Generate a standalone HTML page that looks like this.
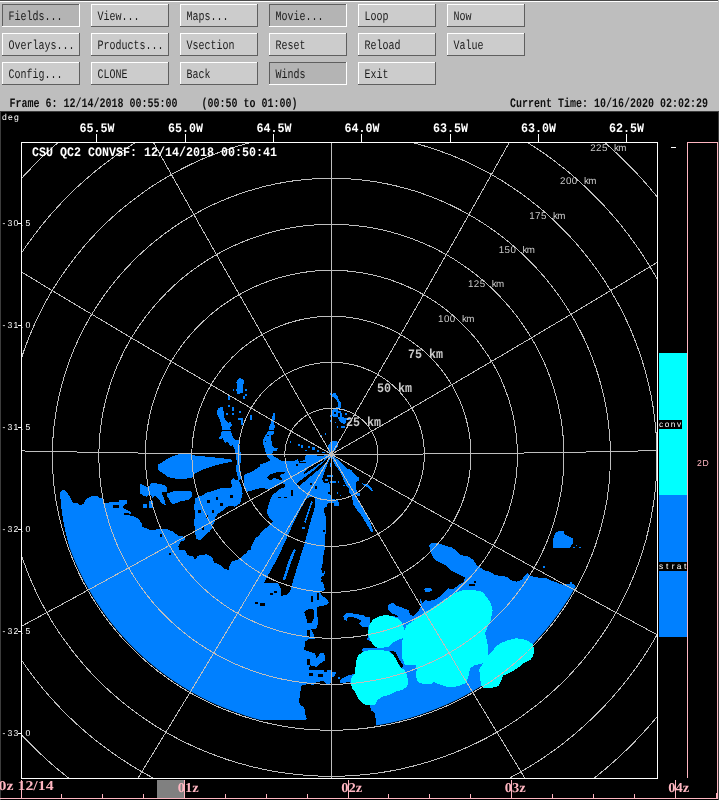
<!DOCTYPE html>
<html><head><meta charset="utf-8"><title>CSU QC2 CONVSF radar display</title>
<style>html,body{margin:0;padding:0;background:#000;overflow:hidden}svg{display:block}text{text-rendering:geometricPrecision;white-space:pre}</style>
</head><body>
<svg width="719" height="800" viewBox="0 0 719 800" style="will-change:transform">
<rect x="0" y="0" width="719" height="800" fill="#000"/>
<rect x="0" y="0" width="719" height="111" fill="#bebebe"/>
<rect x="0" y="0" width="718" height="1" fill="#4a4a4a"/>
<rect x="0" y="1" width="718" height="1" fill="#fff"/>
<rect x="0" y="111" width="719" height="1" fill="#3c3c3c"/>
<rect x="0" y="111" width="1" height="689" fill="#3c3c3c"/>
<rect x="718" y="111" width="1" height="689" fill="#3c3c3c"/>
<rect x="2" y="4" width="78" height="23" fill="#b4b4b4"/>
<rect x="2" y="4" width="78" height="1" fill="#5f5f5f"/>
<rect x="2" y="4" width="1" height="23" fill="#5f5f5f"/>
<rect x="2" y="26" width="78" height="1" fill="#fff"/>
<rect x="79" y="4" width="1" height="23" fill="#fff"/>
<text x="8.5" y="20" font-family="'Liberation Mono', monospace" font-size="13" font-weight="normal" fill="#1a1a1a" textLength="54" lengthAdjust="spacingAndGlyphs" >Fields...</text>
<rect x="91" y="4" width="78" height="23" fill="#cccccc"/>
<rect x="91" y="4" width="78" height="1" fill="#fff"/>
<rect x="91" y="4" width="1" height="23" fill="#fff"/>
<rect x="91" y="26" width="78" height="1" fill="#5f5f5f"/>
<rect x="168" y="4" width="1" height="23" fill="#5f5f5f"/>
<text x="97.5" y="20" font-family="'Liberation Mono', monospace" font-size="13" font-weight="normal" fill="#1a1a1a" textLength="42" lengthAdjust="spacingAndGlyphs" >View...</text>
<rect x="180" y="4" width="78" height="23" fill="#cccccc"/>
<rect x="180" y="4" width="78" height="1" fill="#fff"/>
<rect x="180" y="4" width="1" height="23" fill="#fff"/>
<rect x="180" y="26" width="78" height="1" fill="#5f5f5f"/>
<rect x="257" y="4" width="1" height="23" fill="#5f5f5f"/>
<text x="186.5" y="20" font-family="'Liberation Mono', monospace" font-size="13" font-weight="normal" fill="#1a1a1a" textLength="42" lengthAdjust="spacingAndGlyphs" >Maps...</text>
<rect x="269" y="4" width="78" height="23" fill="#b4b4b4"/>
<rect x="269" y="4" width="78" height="1" fill="#5f5f5f"/>
<rect x="269" y="4" width="1" height="23" fill="#5f5f5f"/>
<rect x="269" y="26" width="78" height="1" fill="#fff"/>
<rect x="346" y="4" width="1" height="23" fill="#fff"/>
<text x="275.5" y="20" font-family="'Liberation Mono', monospace" font-size="13" font-weight="normal" fill="#1a1a1a" textLength="48" lengthAdjust="spacingAndGlyphs" >Movie...</text>
<rect x="358" y="4" width="78" height="23" fill="#cccccc"/>
<rect x="358" y="4" width="78" height="1" fill="#fff"/>
<rect x="358" y="4" width="1" height="23" fill="#fff"/>
<rect x="358" y="26" width="78" height="1" fill="#5f5f5f"/>
<rect x="435" y="4" width="1" height="23" fill="#5f5f5f"/>
<text x="364.5" y="20" font-family="'Liberation Mono', monospace" font-size="13" font-weight="normal" fill="#1a1a1a" textLength="24" lengthAdjust="spacingAndGlyphs" >Loop</text>
<rect x="447" y="4" width="78" height="23" fill="#cccccc"/>
<rect x="447" y="4" width="78" height="1" fill="#fff"/>
<rect x="447" y="4" width="1" height="23" fill="#fff"/>
<rect x="447" y="26" width="78" height="1" fill="#5f5f5f"/>
<rect x="524" y="4" width="1" height="23" fill="#5f5f5f"/>
<text x="453.5" y="20" font-family="'Liberation Mono', monospace" font-size="13" font-weight="normal" fill="#1a1a1a" textLength="18" lengthAdjust="spacingAndGlyphs" >Now</text>
<rect x="2" y="33" width="78" height="23" fill="#cccccc"/>
<rect x="2" y="33" width="78" height="1" fill="#fff"/>
<rect x="2" y="33" width="1" height="23" fill="#fff"/>
<rect x="2" y="55" width="78" height="1" fill="#5f5f5f"/>
<rect x="79" y="33" width="1" height="23" fill="#5f5f5f"/>
<text x="8.5" y="49" font-family="'Liberation Mono', monospace" font-size="13" font-weight="normal" fill="#1a1a1a" textLength="66" lengthAdjust="spacingAndGlyphs" >Overlays...</text>
<rect x="91" y="33" width="78" height="23" fill="#cccccc"/>
<rect x="91" y="33" width="78" height="1" fill="#fff"/>
<rect x="91" y="33" width="1" height="23" fill="#fff"/>
<rect x="91" y="55" width="78" height="1" fill="#5f5f5f"/>
<rect x="168" y="33" width="1" height="23" fill="#5f5f5f"/>
<text x="97.5" y="49" font-family="'Liberation Mono', monospace" font-size="13" font-weight="normal" fill="#1a1a1a" textLength="66" lengthAdjust="spacingAndGlyphs" >Products...</text>
<rect x="180" y="33" width="78" height="23" fill="#cccccc"/>
<rect x="180" y="33" width="78" height="1" fill="#fff"/>
<rect x="180" y="33" width="1" height="23" fill="#fff"/>
<rect x="180" y="55" width="78" height="1" fill="#5f5f5f"/>
<rect x="257" y="33" width="1" height="23" fill="#5f5f5f"/>
<text x="186.5" y="49" font-family="'Liberation Mono', monospace" font-size="13" font-weight="normal" fill="#1a1a1a" textLength="48" lengthAdjust="spacingAndGlyphs" >Vsection</text>
<rect x="269" y="33" width="78" height="23" fill="#cccccc"/>
<rect x="269" y="33" width="78" height="1" fill="#fff"/>
<rect x="269" y="33" width="1" height="23" fill="#fff"/>
<rect x="269" y="55" width="78" height="1" fill="#5f5f5f"/>
<rect x="346" y="33" width="1" height="23" fill="#5f5f5f"/>
<text x="275.5" y="49" font-family="'Liberation Mono', monospace" font-size="13" font-weight="normal" fill="#1a1a1a" textLength="30" lengthAdjust="spacingAndGlyphs" >Reset</text>
<rect x="358" y="33" width="78" height="23" fill="#cccccc"/>
<rect x="358" y="33" width="78" height="1" fill="#fff"/>
<rect x="358" y="33" width="1" height="23" fill="#fff"/>
<rect x="358" y="55" width="78" height="1" fill="#5f5f5f"/>
<rect x="435" y="33" width="1" height="23" fill="#5f5f5f"/>
<text x="364.5" y="49" font-family="'Liberation Mono', monospace" font-size="13" font-weight="normal" fill="#1a1a1a" textLength="36" lengthAdjust="spacingAndGlyphs" >Reload</text>
<rect x="447" y="33" width="78" height="23" fill="#cccccc"/>
<rect x="447" y="33" width="78" height="1" fill="#fff"/>
<rect x="447" y="33" width="1" height="23" fill="#fff"/>
<rect x="447" y="55" width="78" height="1" fill="#5f5f5f"/>
<rect x="524" y="33" width="1" height="23" fill="#5f5f5f"/>
<text x="453.5" y="49" font-family="'Liberation Mono', monospace" font-size="13" font-weight="normal" fill="#1a1a1a" textLength="30" lengthAdjust="spacingAndGlyphs" >Value</text>
<rect x="2" y="62" width="78" height="23" fill="#cccccc"/>
<rect x="2" y="62" width="78" height="1" fill="#fff"/>
<rect x="2" y="62" width="1" height="23" fill="#fff"/>
<rect x="2" y="84" width="78" height="1" fill="#5f5f5f"/>
<rect x="79" y="62" width="1" height="23" fill="#5f5f5f"/>
<text x="8.5" y="78" font-family="'Liberation Mono', monospace" font-size="13" font-weight="normal" fill="#1a1a1a" textLength="54" lengthAdjust="spacingAndGlyphs" >Config...</text>
<rect x="91" y="62" width="78" height="23" fill="#cccccc"/>
<rect x="91" y="62" width="78" height="1" fill="#fff"/>
<rect x="91" y="62" width="1" height="23" fill="#fff"/>
<rect x="91" y="84" width="78" height="1" fill="#5f5f5f"/>
<rect x="168" y="62" width="1" height="23" fill="#5f5f5f"/>
<text x="97.5" y="78" font-family="'Liberation Mono', monospace" font-size="13" font-weight="normal" fill="#1a1a1a" textLength="30" lengthAdjust="spacingAndGlyphs" >CLONE</text>
<rect x="180" y="62" width="78" height="23" fill="#cccccc"/>
<rect x="180" y="62" width="78" height="1" fill="#fff"/>
<rect x="180" y="62" width="1" height="23" fill="#fff"/>
<rect x="180" y="84" width="78" height="1" fill="#5f5f5f"/>
<rect x="257" y="62" width="1" height="23" fill="#5f5f5f"/>
<text x="186.5" y="78" font-family="'Liberation Mono', monospace" font-size="13" font-weight="normal" fill="#1a1a1a" textLength="24" lengthAdjust="spacingAndGlyphs" >Back</text>
<rect x="269" y="62" width="78" height="23" fill="#b4b4b4"/>
<rect x="269" y="62" width="78" height="1" fill="#5f5f5f"/>
<rect x="269" y="62" width="1" height="23" fill="#5f5f5f"/>
<rect x="269" y="84" width="78" height="1" fill="#fff"/>
<rect x="346" y="62" width="1" height="23" fill="#fff"/>
<text x="275.5" y="78" font-family="'Liberation Mono', monospace" font-size="13" font-weight="normal" fill="#1a1a1a" textLength="30" lengthAdjust="spacingAndGlyphs" >Winds</text>
<rect x="358" y="62" width="78" height="23" fill="#cccccc"/>
<rect x="358" y="62" width="78" height="1" fill="#fff"/>
<rect x="358" y="62" width="1" height="23" fill="#fff"/>
<rect x="358" y="84" width="78" height="1" fill="#5f5f5f"/>
<rect x="435" y="62" width="1" height="23" fill="#5f5f5f"/>
<text x="364.5" y="78" font-family="'Liberation Mono', monospace" font-size="13" font-weight="normal" fill="#1a1a1a" textLength="24" lengthAdjust="spacingAndGlyphs" >Exit</text>
<text x="9.5" y="107" font-family="'Liberation Mono', monospace" font-size="13" font-weight="bold" fill="#111" textLength="168" lengthAdjust="spacingAndGlyphs" >Frame 6: 12/14/2018 00:55:00</text>
<text x="201.5" y="107" font-family="'Liberation Mono', monospace" font-size="13" font-weight="bold" fill="#111" textLength="96" lengthAdjust="spacingAndGlyphs" >(00:50 to 01:00)</text>
<text x="510" y="107" font-family="'Liberation Mono', monospace" font-size="13" font-weight="bold" fill="#111" textLength="198" lengthAdjust="spacingAndGlyphs" >Current Time: 10/16/2020 02:02:29</text>
<defs><clipPath id="pc"><rect x="21.5" y="142.5" width="636" height="636"/></clipPath></defs>
<g clip-path="url(#pc)">
<defs><clipPath id="rc"><path d="M331.4,179.6 L340.9,179.8 L350.5,180.2 L360.0,181.1 L369.4,182.2 L378.8,183.7 L388.2,185.5 L397.5,187.6 L406.7,190.0 L415.9,192.8 L424.9,195.8 L433.8,199.2 L442.6,202.9 L451.3,206.9 L459.9,211.1 L468.3,215.7 L476.5,220.6 L484.6,225.7 L492.5,231.1 L500.1,236.8 L507.6,242.7 L514.9,248.9 L522.0,255.4 L528.9,262.1 L535.5,269.0 L541.9,276.1 L548.0,283.5 L553.9,291.1 L559.5,298.8 L564.8,306.8 L569.9,314.9 L574.7,323.2 L579.2,331.7 L583.4,340.3 L587.3,349.1 L590.9,358.0 L594.2,367.0 L597.1,376.1 L599.8,385.3 L602.1,394.6 L604.1,404.0 L605.8,413.4 L607.1,422.9 L608.1,432.5 L608.8,442.0 L609.1,451.6 L609.1,461.2 L608.7,470.8 L608.1,480.3 L607.0,489.9 L605.7,499.4 L604.0,508.8 L601.9,518.2 L599.6,527.5 L596.9,536.7 L593.8,545.9 L590.5,554.9 L586.8,563.8 L582.8,572.5 L578.5,581.2 L573.9,589.6 L569.0,597.9 L563.7,606.1 L558.2,614.0 L552.4,621.8 L546.4,629.3 L540.0,636.6 L533.4,643.7 L526.6,650.6 L519.5,657.2 L512.2,663.6 L504.6,669.8 L496.8,675.6 L488.8,681.2 L480.6,686.5 L472.2,691.5 L463.7,696.3 L454.9,700.7 L446.1,704.8 L437.0,708.6 L427.8,712.1 L418.6,715.3 L409.2,718.2 L399.7,720.7 L390.1,722.9 L380.4,724.8 L370.7,726.3 L360.9,727.5 L351.1,728.3 L341.3,728.8 L331.4,729.0 L321.5,728.8 L311.7,728.3 L301.9,727.5 L292.1,726.3 L282.4,724.8 L272.7,722.9 L263.1,720.7 L253.6,718.2 L244.2,715.3 L235.0,712.1 L225.8,708.6 L216.7,704.8 L207.9,700.7 L199.1,696.3 L190.6,691.5 L182.2,686.5 L174.0,681.2 L166.0,675.6 L158.2,669.8 L150.6,663.6 L143.3,657.2 L136.2,650.6 L129.4,643.7 L122.8,636.6 L116.4,629.3 L110.4,621.8 L104.6,614.0 L99.1,606.1 L93.8,597.9 L88.9,589.6 L84.3,581.2 L80.0,572.5 L76.0,563.8 L72.3,554.9 L69.0,545.9 L65.9,536.7 L63.2,527.5 L60.9,518.2 L58.8,508.8 L57.1,499.4 L55.8,489.9 L54.7,480.3 L54.1,470.8 L53.7,461.2 L53.7,451.6 L54.0,442.0 L54.7,432.5 L55.7,422.9 L57.0,413.4 L58.7,404.0 L60.7,394.6 L63.0,385.3 L65.7,376.1 L68.6,367.0 L71.9,358.0 L75.5,349.1 L79.4,340.3 L83.6,331.7 L88.1,323.2 L92.9,314.9 L98.0,306.8 L103.3,298.8 L108.9,291.1 L114.8,283.5 L120.9,276.1 L127.3,269.0 L133.9,262.1 L140.8,255.4 L147.9,248.9 L155.2,242.7 L162.7,236.8 L170.3,231.1 L178.2,225.7 L186.3,220.6 L194.5,215.7 L202.9,211.1 L211.5,206.9 L220.2,202.9 L229.0,199.2 L237.9,195.8 L246.9,192.8 L256.1,190.0 L265.3,187.6 L274.6,185.5 L284.0,183.7 L293.4,182.2 L302.8,181.1 L312.3,180.2 L321.9,179.8Z"/></clipPath>
<clipPath id="t0"><rect x="20" y="430" width="120" height="120"/></clipPath>
<clipPath id="t1"><rect x="20" y="550" width="120" height="120"/></clipPath>
<clipPath id="t2"><rect x="140" y="550" width="120" height="120"/></clipPath>
<clipPath id="t3"><rect x="140" y="430" width="120" height="120"/></clipPath>
<clipPath id="t4"><rect x="260" y="430" width="120" height="120"/></clipPath>
<clipPath id="t5"><rect x="380" y="430" width="120" height="120"/></clipPath>
<clipPath id="t6"><rect x="500" y="430" width="120" height="120"/></clipPath>
<clipPath id="t7"><rect x="260" y="550" width="80" height="120"/></clipPath>
<clipPath id="t8"><rect x="140" y="670" width="120" height="120"/></clipPath>
<clipPath id="t9"><rect x="260" y="670" width="80" height="120"/></clipPath>
<clipPath id="t10"><rect x="200" y="360" width="90" height="70"/></clipPath>
<clipPath id="t11"><rect x="300" y="380" width="80" height="50"/></clipPath>
<clipPath id="t12"><rect x="340" y="540" width="280" height="200"/></clipPath>
</defs>
<g clip-path="url(#rc)" shape-rendering="crispEdges">
<g clip-path="url(#t0)">
<rect x="20" y="430" width="120" height="120" fill="#000"/>
<polygon points="60.1,492.6 62.6,490.1 65.1,490.1 67.6,493.4 70.1,496.8 71.7,500.9 73.4,503.1 77.6,503.4 79.2,504.8 83.4,504.3 85.9,499.3 88.4,497.6 91.8,496.4 98.4,496.4 99.3,498.4 103.4,498.1 104.3,503.4 108.5,502.6 113.5,502.1 118.5,501.8 119.3,500.1 126.8,500.1 126.8,503.4 123.5,505.1 124.3,508.4 130.2,511.8 131.0,513.4 128.5,515.1 135.2,516.8 141.8,521.0 141.8,551.8 70.1,551.8 67.6,540.2 65.1,530.1 62.6,516.8 60.9,505.1" fill="#0080ff"/>
<polygon points="112.6,505.4 118.8,505.4 118.8,508.1 112.6,508.1" fill="#000"/>
<polygon points="122.6,506.4 125.1,506.4 125.1,508.4 122.6,508.4" fill="#000"/>
<polygon points="124.3,512.6 128.5,512.6 128.5,515.1 124.3,515.1" fill="#000"/>
</g>
<g clip-path="url(#t1)">
<rect x="20" y="550" width="120" height="120" fill="#000"/>
<polygon points="18.3,548.3 141.8,548.3 141.8,671.8 18.3,671.8" fill="#0080ff"/>
</g>
<g clip-path="url(#t2)">
<rect x="140" y="550" width="120" height="120" fill="#000"/>
<polygon points="138.3,548.3 261.8,548.3 261.8,671.8 138.3,671.8" fill="#0080ff"/>
<polygon points="184.2,548.3 187.6,555.0 193.4,556.7 195.1,560.0 197.6,555.8 206.8,554.2 211.8,556.7 214.3,562.5 220.1,565.0 223.4,568.4 228.5,570.0 229.3,565.9 231.8,561.7 236.8,560.0 241.8,556.7 246.8,552.5 248.5,548.3" fill="#000"/>
<polygon points="255.2,602.1 257.8,602.1 257.8,604.1 255.2,604.1" fill="#000"/>
<polygon points="168.9,553.3 171.0,553.3 171.0,554.7 168.9,554.7" fill="#000"/>
</g>
<g clip-path="url(#t3)">
<rect x="140" y="430" width="120" height="120" fill="#000"/>
<polygon points="157.5,465.0 161.7,462.5 166.7,459.2 172.5,456.4 180.1,453.7 190.1,453.4 193.4,455.4 206.8,456.7 223.4,458.4 231.8,459.7 231.8,461.7 223.4,463.4 213.4,465.9 206.8,468.1 200.1,470.9 195.1,473.7 191.7,477.6 183.4,479.2 173.4,478.4 167.5,476.7 163.4,473.7 159.2,470.9 157.5,467.6" fill="#0080ff"/>
<polygon points="138.3,482.6 143.3,485.1 148.3,487.6 151.7,482.6 156.7,483.4 165.0,485.1 167.5,487.6 166.7,491.8 161.7,492.6 163.4,496.8 165.0,501.8 165.9,505.1 161.7,503.4 158.4,498.4 155.0,495.9 152.5,497.6 150.0,494.3 146.7,496.8 142.5,495.1 138.3,492.1" fill="#0080ff"/>
<polygon points="142.5,504.3 146.7,504.3 146.7,508.4 142.5,508.4" fill="#0080ff"/>
<polygon points="149.2,500.9 152.5,500.9 152.5,507.6 149.2,507.6" fill="#0080ff"/>
<polygon points="166.7,493.4 173.4,491.4 190.1,490.9 192.6,492.6 191.7,496.8 188.4,500.1 181.7,500.9 175.9,503.4 172.5,504.3 170.0,500.9 167.5,496.8" fill="#0080ff"/>
<polygon points="195.1,498.4 201.8,497.6 206.8,495.1 213.4,492.6 223.4,492.1 228.5,490.1 231.8,486.7 231.0,480.1 233.5,477.6 236.0,480.1 238.5,480.1 240.1,483.4 241.8,487.6 242.6,493.4 240.1,496.8 233.5,495.9 230.1,498.4 223.4,500.9 220.1,505.9 215.1,505.1 213.4,513.4 210.1,511.8 208.4,508.4 203.4,509.3 201.8,503.4 198.4,501.8 195.9,501.8" fill="#0080ff"/>
<polygon points="196.7,508.4 203.4,510.1 205.1,518.5 210.1,523.5 213.4,526.8 210.1,530.1 206.8,533.5 203.4,536.8 200.1,540.2 196.7,538.5 195.1,530.1 194.2,520.1 195.9,513.4" fill="#0080ff"/>
<polygon points="195.1,500.0 197.6,496.7 203.4,495.0 206.8,492.5 213.4,490.8 220.1,488.3 240.1,488.3 241.8,496.7 240.1,503.4 235.1,506.7 228.5,505.9 223.4,510.0 218.4,513.4 215.1,517.5 214.3,523.4 211.8,525.9 210.1,531.7 205.9,533.4 203.4,537.6 199.2,540.1 195.9,538.4 195.1,531.7 194.2,523.4 195.1,515.0 194.2,506.7" fill="#0080ff"/>
<polygon points="206.8,500.0 210.1,500.0 210.1,503.4 206.8,503.4" fill="#000"/>
<polygon points="215.9,496.7 218.4,496.7 218.4,500.3 215.9,500.3" fill="#000"/>
<polygon points="220.1,503.4 223.4,503.4 223.4,505.9 220.1,505.9" fill="#000"/>
<polygon points="198.4,510.0 200.9,510.0 200.9,513.4 198.4,513.4" fill="#000"/>
<polygon points="205.9,515.0 208.4,515.0 208.4,518.4 205.9,518.4" fill="#000"/>
<polygon points="211.8,510.0 214.3,510.0 214.3,512.5 211.8,512.5" fill="#000"/>
<polygon points="201.8,526.7 204.3,526.7 204.3,530.1 201.8,530.1" fill="#000"/>
<polygon points="230.1,495.0 232.6,495.0 232.6,497.5 230.1,497.5" fill="#000"/>
<polygon points="221.8,430.8 231.0,430.8 232.6,436.7 235.1,440.0 238.5,440.0 240.1,448.4 241.0,456.7 240.1,468.4 241.8,478.4 238.5,480.1 236.0,470.1 236.8,461.7 235.1,450.0 232.6,445.0 230.1,446.7 227.6,441.7 225.1,443.4 222.6,438.3 218.4,439.2 220.9,435.0" fill="#0080ff"/>
<polygon points="243.5,475.1 253.5,470.9 261.8,465.0 261.8,487.6 253.5,490.1 246.8,491.8 244.3,485.1 243.5,480.1" fill="#0080ff"/>
<polygon points="138.3,521.0 142.5,523.5 141.7,526.8 146.7,528.5 150.0,530.1 158.4,529.3 165.0,528.5 173.4,531.8 178.4,536.0 185.1,536.8 185.1,540.2 180.1,541.8 178.4,546.8 180.1,551.8 138.3,551.8" fill="#0080ff"/>
<polygon points="160.0,533.5 161.7,533.5 161.7,536.8 160.0,536.8" fill="#000"/>
<polygon points="261.8,533.5 255.2,538.5 251.8,545.2 250.2,551.8 261.8,551.8" fill="#0080ff"/>
</g>
<g clip-path="url(#t4)">
<rect x="260" y="430" width="120" height="120" fill="#000"/>
<polygon points="258.9,464.5 263.3,463.4 267.8,461.7 270.6,460.3 267.8,457.8 266.1,453.9 265.0,450.0 263.3,444.5 263.3,440.0 263.9,437.8 266.7,433.3 268.9,431.1 273.9,431.1 273.4,434.5 271.1,435.6 270.6,438.9 272.2,442.2 271.7,445.6 274.5,447.8 277.8,448.4 276.7,450.6 273.4,451.1 272.2,453.9 273.9,456.7 276.7,457.8 278.9,459.5 282.3,461.2 293.4,461.2 297.8,459.2 298.9,461.7 304.5,460.0 304.5,456.1 307.8,455.0 315.6,455.0 319.0,456.1 322.3,455.8 329.0,454.7 331.3,454.3 330.6,463.3 330.0,470.0 328.4,476.7 329.5,483.4 330.0,492.3 331.5,499.2 338.4,499.8 338.7,505.6 334.5,506.2 333.4,502.8 327.8,503.4 326.7,506.7 323.4,508.9 325.6,516.7 326.1,525.6 325.6,532.3 325.0,541.2 325.6,551.2 240.0,552.0 240.0,464.0" fill="#0080ff"/>
<polygon points="327.9,457.8 323.4,462.3 317.9,466.7 312.3,471.7 306.7,475.6 302.3,479.0 297.8,482.3 296.7,485.1 299.5,485.6 304.5,481.7 310.1,476.7 315.6,472.3 320.6,467.8 325.6,462.8 328.4,459.5" fill="#000"/>
<polygon points="324.0,459.2 319.0,461.7 313.4,464.7 309.0,467.8 304.5,471.7 303.9,473.9 309.0,471.2 314.5,467.3 320.1,463.4 324.5,460.6" fill="#000"/>
<polygon points="267.2,477.3 270.0,474.5 274.5,472.8 277.8,472.3 284.5,472.1 285.0,473.4 281.1,473.9 280.0,476.7 282.3,479.0 281.1,480.6 277.8,479.0 274.5,477.8 271.7,479.5 268.9,479.5" fill="#000"/>
<polygon points="250.0,487.8 258.9,487.8 264.4,488.3 267.8,489.4 272.2,487.8 277.8,485.6 282.2,483.3 285.0,484.4 284.4,487.2 280.0,488.9 276.7,491.7 272.2,495.0 270.0,500.0 266.7,511.7 269.2,517.5 273.3,521.7 269.2,525.8 263.3,530.0 256.7,536.7 250.0,545.0" fill="#000"/>
<polygon points="291.2,490.1 292.8,490.1 292.8,495.6 291.2,495.6" fill="#000"/>
<polygon points="295.6,463.9 298.4,463.9 298.4,465.6 295.6,465.6" fill="#000"/>
<polygon points="298.9,462.0 305.6,462.0 305.6,463.4 298.9,463.4" fill="#000"/>
<polygon points="278.4,496.8 280.6,496.8 280.6,498.4 278.4,498.4" fill="#000"/>
<polygon points="283.9,496.8 286.7,496.8 286.7,498.4 283.9,498.4" fill="#000"/>
<polygon points="314.5,485.6 316.7,485.6 316.7,489.0 314.5,489.0" fill="#000"/>
<polygon points="264.5,440.6 266.1,440.6 266.1,442.2 264.5,442.2" fill="#000"/>
<polygon points="267.2,434.5 268.9,434.5 268.9,436.1 267.2,436.1" fill="#000"/>
<polygon points="330.3,458.4 328.4,462.3 326.1,467.8 323.9,473.4 322.3,479.0 322.8,482.3 326.1,483.2 328.4,482.3 330.0,484.5 331.2,485.6 331.2,458.4" fill="#000"/>
<polygon points="329.5,463.4 331.2,463.4 331.2,466.7 329.5,466.7" fill="#0080ff"/>
<polygon points="326.7,474.5 329.5,474.5 329.5,476.7 326.7,476.7" fill="#0080ff"/>
<polygon points="325.0,479.0 327.8,479.0 327.8,480.6 325.0,480.6" fill="#0080ff"/>
<polygon points="313.0,496.5 306.7,498.3 300.0,510.0 293.3,523.3 286.7,538.3 278.3,556.7 270.0,571.7 264.2,582.5 278.3,583.3 280.8,588.3 280.8,595.8 286.7,595.0 290.8,590.0 293.3,580.0 298.3,563.3 304.2,545.0 310.0,523.3 315.0,506.7 315.5,497.0" fill="#000"/>
<polygon points="294.2,549.2 295.8,550.0 290.8,563.3 285.0,580.0 282.5,580.8 286.7,566.7 290.8,555.0" fill="#0080ff"/>
<polygon points="311.1,501.2 312.8,501.7 308.3,514.5 305.6,522.3 304.2,522.3 306.7,513.9" fill="#0080ff"/>
<polygon points="310.0,482.8 312.2,482.8 312.2,485.0 310.0,485.0" fill="#000"/>
<polygon points="314.5,485.6 316.7,485.6 316.7,488.9 314.5,488.9" fill="#000"/>
<polygon points="328.4,491.7 330.0,491.7 330.0,493.9 328.4,493.9" fill="#000"/>
<polygon points="322.8,530.1 325.0,530.1 325.0,531.8 322.8,531.8" fill="#000"/>
<polygon points="331.4,454.3 334.0,456.5 338.3,460.0 346.7,468.3 351.2,470.0 355.6,475.6 359.0,477.8 359.5,480.6 355.6,482.2 355.6,487.8 357.9,492.3 360.1,493.9 359.0,496.1 355.6,495.0 357.9,500.0 362.3,506.7 366.8,514.5 370.1,522.3 372.3,527.9 372.9,531.8 371.2,531.8 366.8,524.5 362.3,516.7 357.9,511.2 353.4,504.5 352.3,498.9 351.2,495.0 349.0,492.3 349.0,488.9 346.7,486.7 344.5,482.2 342.3,476.7 338.9,470.0 335.0,465.0 332.0,458.0" fill="#0080ff"/>
<polygon points="362.3,483.4 366.8,483.9 370.1,486.7 372.9,490.0 372.3,491.7 370.1,490.0 366.8,486.7 363.4,485.0" fill="#0080ff"/>
<polygon points="330.0,475.0 333.4,475.0 333.4,476.7 330.0,476.7" fill="#0080ff"/>
<polygon points="330.0,481.1 335.6,481.1 335.6,482.8 330.0,482.8" fill="#0080ff"/>
<polygon points="337.8,481.1 339.2,481.1 339.2,482.5 337.8,482.5" fill="#0080ff"/>
<polygon points="342.8,485.0 345.1,485.0 345.1,486.1 342.8,486.1" fill="#0080ff"/>
<polygon points="347.8,486.7 349.5,486.7 349.5,488.4 347.8,488.4" fill="#0080ff"/>
<polygon points="336.7,492.3 338.4,492.3 338.4,493.9 336.7,493.9" fill="#0080ff"/>
<polygon points="339.5,494.5 341.2,494.5 341.2,496.1 339.5,496.1" fill="#0080ff"/>
<polygon points="349.5,490.0 351.7,490.0 351.7,493.4 349.5,493.4" fill="#0080ff"/>
<polygon points="358.4,493.9 360.1,493.9 360.1,496.1 358.4,496.1" fill="#0080ff"/>
<polygon points="302.2,526.7 304.5,526.7 304.5,529.0 302.2,529.0" fill="#0080ff"/>
<polygon points="304.5,521.2 306.1,521.2 306.1,522.9 304.5,522.9" fill="#0080ff"/>
<polygon points="371.2,530.1 372.9,530.1 372.9,531.8 371.2,531.8" fill="#0080ff"/>
<polygon points="297.8,443.9 299.5,443.9 299.5,445.6 297.8,445.6" fill="#0080ff"/>
<polygon points="301.2,444.5 303.4,444.5 303.4,447.8 301.2,447.8" fill="#0080ff"/>
<polygon points="307.8,446.1 310.1,446.1 310.1,447.8 307.8,447.8" fill="#0080ff"/>
<polygon points="312.3,446.7 314.5,446.7 314.5,449.5 312.3,449.5" fill="#0080ff"/>
<polygon points="317.3,450.0 319.0,450.0 319.0,451.7 317.3,451.7" fill="#0080ff"/>
<polygon points="304.5,450.0 306.7,450.0 306.7,451.1 304.5,451.1" fill="#0080ff"/>
<polygon points="289.5,440.6 290.6,440.6 290.6,443.4 289.5,443.4" fill="#0080ff"/>
<polygon points="321.2,435.0 322.3,435.0 322.3,436.7 321.2,436.7" fill="#0080ff"/>
<polygon points="325.1,433.3 326.2,433.3 326.2,434.5 325.1,434.5" fill="#0080ff"/>
<polygon points="322.3,451.7 325.1,451.7 325.1,453.0 322.3,453.0" fill="#0080ff"/>
<polygon points="331.8,454.3 329.2,452.3 327.9,449.5 328.4,445.6 330.7,442.2 333.4,441.1 336.2,441.1 338.4,443.4 337.9,446.7 335.7,449.5 333.4,452.3" fill="#0080ff"/>
</g>
<g clip-path="url(#t5)">
<rect x="380" y="430" width="120" height="120" fill="#000"/>
<polygon points="429.2,545.2 431.7,543.5 438.4,543.5 443.4,545.2 451.8,547.7 451.8,551.8 429.2,551.8" fill="#0080ff"/>
</g>
<g clip-path="url(#t6)">
<rect x="500" y="430" width="120" height="120" fill="#000"/>
<polygon points="553.4,538.4 555.1,533.4 558.4,530.9 563.4,530.9 564.3,534.2 568.4,535.9 572.6,538.4 572.9,543.4 570.1,547.6 561.8,548.4 553.4,547.6" fill="#0080ff"/>
<polygon points="573.4,546.7 575.1,546.7 575.1,548.4 573.4,548.4" fill="#0080ff"/>
<polygon points="575.9,545.1 577.1,545.1 577.1,546.4 575.9,546.4" fill="#0080ff"/>
<polygon points="579.3,546.7 580.9,546.7 580.9,548.4 579.3,548.4" fill="#0080ff"/>
</g>
<g clip-path="url(#t7)">
<rect x="260" y="550" width="80" height="120" fill="#000"/>
<polygon points="258.3,548.3 324.3,548.3 322.6,563.4 320.9,570.0 325.1,571.7 324.3,575.0 320.9,577.5 323.4,583.4 325.1,590.1 320.1,591.7 320.9,595.1 325.1,597.6 329.3,602.6 326.8,605.1 317.6,606.7 316.7,613.4 318.4,621.8 316.7,628.4 310.9,629.3 313.4,633.4 315.1,638.5 308.4,639.3 305.1,641.8 304.2,650.1 310.1,651.8 315.1,653.5 316.7,658.5 320.1,653.5 324.3,652.6 325.1,660.2 320.1,663.5 316.7,666.8 310.1,665.2 308.4,671.8 258.3,671.8" fill="#0080ff"/>
<polygon points="313.0,496.5 306.7,498.3 300.0,510.0 293.3,523.3 286.7,538.3 278.3,556.7 270.0,571.7 264.2,582.5 278.3,583.3 280.8,588.3 280.8,595.8 286.7,595.0 290.8,590.0 293.3,580.0 298.3,563.3 304.2,545.0 310.0,523.3 315.0,506.7 315.5,497.0" fill="#000"/>
<polygon points="294.2,549.2 295.8,550.0 290.8,563.3 285.0,580.0 282.5,580.8 286.7,566.7 290.8,555.0" fill="#0080ff"/>
<polygon points="304.2,611.8 308.4,609.2 313.4,609.2 314.2,616.8 311.7,623.4 307.6,623.4 305.9,616.8" fill="#000"/>
<polygon points="310.9,595.9 313.4,595.9 313.4,601.7 310.9,601.7" fill="#000"/>
<polygon points="316.7,593.4 319.2,593.4 319.2,600.1 316.7,600.1" fill="#000"/>
<polygon points="306.7,630.1 310.1,630.1 310.1,636.8 306.7,636.8" fill="#000"/>
<polygon points="306.7,658.5 310.1,658.5 310.1,665.2 306.7,665.2" fill="#000"/>
<polygon points="270.0,592.6 272.5,592.6 272.5,595.1 270.0,595.1" fill="#000"/>
<polygon points="274.2,590.9 276.7,590.9 276.7,592.6 274.2,592.6" fill="#000"/>
<polygon points="260.0,603.4 265.0,603.4 265.0,605.9 260.0,605.9" fill="#000"/>
<polygon points="321.8,570.9 324.3,570.9 324.3,572.5 321.8,572.5" fill="#000"/>
<polygon points="320.9,580.0 323.4,580.0 323.4,581.7 320.9,581.7" fill="#000"/>
</g>
<g clip-path="url(#t8)">
<rect x="140" y="670" width="120" height="120" fill="#000"/>
<polygon points="138.3,668.3 261.8,668.3 261.8,791.8 138.3,791.8" fill="#0080ff"/>
</g>
<g clip-path="url(#t9)">
<rect x="260" y="670" width="80" height="120" fill="#000"/>
<polygon points="258.3,638.3 305.1,638.3 304.2,646.7 306.7,650.0 310.1,652.5 315.1,651.7 318.4,655.0 320.9,652.5 324.3,653.4 325.1,660.0 323.4,663.4 326.8,665.0 330.1,667.5 330.9,671.7 335.9,672.5 335.1,675.9 331.8,677.6 332.1,683.4 325.9,683.7 323.4,680.9 315.1,682.6 313.4,685.1 308.4,683.7 300.9,685.9 300.1,696.7 298.4,700.1 300.9,705.9 304.2,706.8 305.1,713.4 306.7,718.4 305.9,720.4 258.3,720.4" fill="#0080ff"/>
<polygon points="305.9,658.4 308.4,658.4 308.4,665.0 305.9,665.0" fill="#000"/>
<polygon points="309.2,673.4 313.4,673.4 313.4,675.9 309.2,675.9" fill="#000"/>
<polygon points="313.4,655.9 319.2,655.9 319.2,661.7 313.4,661.7" fill="#000"/>
<polygon points="317.6,674.2 322.6,674.2 322.6,676.7 317.6,676.7" fill="#000"/>
<polygon points="324.3,669.2 326.8,669.2 326.8,671.7 324.3,671.7" fill="#000"/>
<polygon points="337.6,676.7 340.1,676.7 340.1,679.2 337.6,679.2" fill="#0080ff"/>
</g>
<g clip-path="url(#t10)">
<rect x="200" y="360" width="90" height="70" fill="#000"/>
<polygon points="236.3,382.5 238.2,378.8 240.7,378.2 244.4,380.0 243.2,385.0 243.2,393.2 237.6,393.8 236.3,390.0 237.6,385.0" fill="#0080ff"/>
<polygon points="232.5,388.8 234.4,388.8 234.4,390.7 232.5,390.7" fill="#0080ff"/>
<polygon points="245.1,388.8 246.9,388.8 246.9,390.7 245.1,390.7" fill="#0080ff"/>
<polygon points="245.1,393.8 246.9,393.8 246.9,395.7 245.1,395.7" fill="#0080ff"/>
<polygon points="243.2,396.3 245.1,396.3 245.1,399.4 243.2,399.4" fill="#0080ff"/>
<polygon points="228.2,395.0 230.0,395.0 230.0,400.1 228.2,400.1" fill="#0080ff"/>
<polygon points="233.8,397.6 235.7,397.6 235.7,399.4 233.8,399.4" fill="#0080ff"/>
<polygon points="228.2,405.1 230.0,405.1 230.0,406.9 228.2,406.9" fill="#0080ff"/>
<polygon points="231.9,406.9 233.8,406.9 233.8,410.7 231.9,410.7" fill="#0080ff"/>
<polygon points="226.3,413.2 228.2,413.2 228.2,415.1 226.3,415.1" fill="#0080ff"/>
<polygon points="231.9,413.2 233.8,413.2 233.8,415.1 231.9,415.1" fill="#0080ff"/>
<polygon points="238.8,410.7 240.7,410.7 240.7,412.6 238.8,412.6" fill="#0080ff"/>
<polygon points="237.6,418.2 242.6,418.2 242.6,420.1 237.6,420.1" fill="#0080ff"/>
<polygon points="241.3,420.1 243.2,420.1 243.2,425.1 241.3,425.1" fill="#0080ff"/>
<polygon points="250.1,415.1 251.9,415.1 251.9,420.1 250.1,420.1" fill="#0080ff"/>
<polygon points="216.9,437.6 220.7,437.6 220.7,439.5 216.9,439.5" fill="#0080ff"/>
<polygon points="216.9,411.3 218.8,407.6 223.2,407.3 223.8,415.1 225.0,420.1 228.2,422.6 230.7,422.0 231.9,425.1 230.0,427.6 231.3,431.3 233.8,433.9 233.8,437.6 235.7,440.1 238.8,440.1 239.4,451.4 233.2,451.4 231.9,445.1 229.4,440.1 226.9,442.6 225.0,440.1 223.2,445.1 221.9,440.1 221.3,433.9 221.9,427.6 220.0,420.1 217.5,415.1" fill="#0080ff"/>
<polygon points="273.2,413.2 274.5,413.2 275.1,417.6 273.9,422.6 275.1,427.6 273.2,430.1 273.9,432.6 270.1,435.1 268.2,440.1 270.1,445.1 273.9,447.6 275.1,451.4 263.2,451.4 263.2,441.4 265.1,435.1 268.2,431.3 269.5,426.3 271.3,422.6 272.0,417.6" fill="#0080ff"/>
<polygon points="266.3,435.1 268.2,435.1 268.2,437.0 266.3,437.0" fill="#000"/>
<polygon points="265.1,441.4 267.6,441.4 267.6,443.9 265.1,443.9" fill="#000"/>
<polygon points="270.1,440.1 272.0,440.1 272.0,442.0 270.1,442.0" fill="#000"/>
<polygon points="221.9,430.1 223.8,430.1 223.8,432.6 221.9,432.6" fill="#000"/>
</g>
<g clip-path="url(#t11)">
<rect x="300" y="380" width="80" height="50" fill="#000"/>
<polygon points="331.7,394.5 333.4,393.4 337.8,396.1 338.9,401.1 340.9,402.3 340.9,407.8 337.8,408.4 338.4,410.6 341.2,411.7 342.3,416.7 344.5,417.8 346.7,418.4 346.2,422.8 344.5,423.9 341.2,422.8 338.9,420.1 337.8,416.7 333.4,417.3 331.7,415.6 331.7,410.0 335.6,407.8 337.8,406.7 337.8,402.3 335.6,398.9 332.3,396.7" fill="#0080ff"/>
<polygon points="330.0,393.4 331.7,393.4 331.7,395.0 330.0,395.0" fill="#0080ff"/>
<polygon points="333.9,393.4 336.2,393.4 336.2,395.0 333.9,395.0" fill="#0080ff"/>
<polygon points="343.9,408.9 345.1,408.9 345.1,410.6 343.9,410.6" fill="#0080ff"/>
<polygon points="344.5,412.8 346.7,412.8 346.7,414.5 344.5,414.5" fill="#0080ff"/>
<polygon points="347.3,417.8 349.5,417.8 349.5,419.5 347.3,419.5" fill="#0080ff"/>
<polygon points="334.5,421.7 336.2,421.7 336.2,423.4 334.5,423.4" fill="#0080ff"/>
<polygon points="336.7,426.2 338.4,426.2 338.4,428.4 336.7,428.4" fill="#0080ff"/>
<polygon points="341.2,426.2 344.5,426.2 344.5,428.4 341.2,428.4" fill="#0080ff"/>
<polygon points="330.0,415.0 331.7,415.0 331.7,416.7 330.0,416.7" fill="#0080ff"/>
<polygon points="330.0,420.1 331.7,420.1 331.7,421.7 330.0,421.7" fill="#0080ff"/>
<polygon points="333.9,412.3 336.2,412.3 336.2,413.9 333.9,413.9" fill="#000"/>
<polygon points="338.4,412.8 339.5,412.8 339.5,416.7 338.4,416.7" fill="#000"/>
</g>
<g clip-path="url(#t12)">
<rect x="340" y="540" width="280" height="200" fill="#000"/>
<polygon points="429.2,545.0 431.7,543.3 438.3,543.3 443.3,545.0 451.7,547.5 455.9,550.0 460.1,555.0 468.5,556.7 473.5,560.0 476.8,565.0 480.1,567.5 485.1,570.9 490.2,571.7 495.2,575.0 500.0,575.9 506.7,576.7 510.0,580.0 516.7,581.7 521.7,580.0 525.0,575.0 527.5,573.4 530.0,575.9 538.4,577.5 546.7,578.4 550.1,580.0 556.7,582.5 563.4,585.0 570.1,583.4 570.9,580.0 572.1,583.4 575.9,585.9 610.0,600.0 610.0,760.0 375.0,760.0 375.9,721.8 375.0,713.5 370.9,710.2 370.0,705.5 363.4,704.3 358.4,698.5 355.9,693.5 352.5,688.5 350.8,683.4 350.0,681.8 345.0,682.6 338.3,683.4 338.3,681.3 345.0,676.8 348.3,675.1 353.4,674.3 355.0,673.4 355.9,661.8 358.4,655.1 363.4,651.7 361.7,650.1 363.4,648.4 370.0,648.4 380.1,648.4 375.0,646.7 370.9,641.7 366.7,639.2 368.4,635.9 368.4,630.0 367.5,626.7 361.7,626.7 358.4,623.4 361.7,620.9 356.7,618.4 351.7,616.7 347.5,617.5 346.7,620.9 344.2,620.0 343.3,616.7 345.8,613.4 350.0,613.0 356.7,614.2 363.4,615.0 366.7,617.5 370.0,616.7 370.0,623.4 373.4,619.2 378.4,616.7 385.1,615.0 391.7,615.9 399.2,617.5 396.7,615.0 391.7,613.4 388.4,610.0 388.4,605.0 393.4,602.5 395.1,605.0 401.8,607.5 408.4,610.0 410.1,615.0 413.4,615.9 418.4,611.7 420.9,606.7 420.1,598.3 422.6,603.4 425.1,600.1 428.4,600.9 433.4,600.1 438.4,597.6 443.4,593.4 448.4,588.4 453.4,589.2 458.4,585.0 463.4,582.5 465.1,577.5 460.1,575.0 455.1,572.5 450.1,570.0 445.1,565.0 436.7,560.8 432.6,556.7 430.1,550.0" fill="#0080ff"/>
<polygon points="424.2,589.2 426.7,587.6 430.1,587.6 432.6,590.1 430.1,591.7 425.1,592.1" fill="#0080ff"/>
<polygon points="469.3,584.2 475.1,584.2 475.1,585.9 469.3,585.9" fill="#000"/>
<polygon points="473.5,580.9 476.0,580.9 476.0,583.4 473.5,583.4" fill="#000"/>
<polygon points="390.1,650.9 395.1,651.7 397.6,656.7 400.9,661.8 403.4,665.9 401.8,668.4 398.4,663.4 395.1,657.6 391.7,653.4" fill="#000"/>
<polygon points="543.4,565.9 545.1,565.9 545.1,567.5 543.4,567.5" fill="#0080ff"/>
<polygon points="366.8,514.5 370.1,522.3 372.3,527.9 372.9,531.8 371.2,531.8 366.8,524.5 364.0,519.0" fill="#0080ff"/>
<polygon points="371.2,530.1 372.9,530.1 372.9,531.8 371.2,531.8" fill="#0080ff"/>
<polygon points="553.4,538.4 555.1,533.4 558.4,530.9 563.4,530.9 564.3,534.2 568.4,535.9 572.6,538.4 572.9,543.4 570.1,547.6 561.8,548.4 553.4,547.6" fill="#0080ff"/>
<polygon points="573.4,546.7 575.1,546.7 575.1,548.4 573.4,548.4" fill="#0080ff"/>
<polygon points="575.9,545.1 577.1,545.1 577.1,546.4 575.9,546.4" fill="#0080ff"/>
<polygon points="579.3,546.7 580.9,546.7 580.9,548.4 579.3,548.4" fill="#0080ff"/>
</g>
</g>
<g shape-rendering="crispEdges">
<g clip-path="url(#t12)">
<polygon points="455.9,592.5 463.4,590.0 473.5,590.0 481.8,591.7 485.1,595.0 490.1,601.7 492.6,610.0 490.9,620.0 487.6,626.7 485.1,633.4 486.7,640.1 488.4,648.4 488.4,655.1 485.1,658.4 482.6,663.4 475.0,665.1 470.0,668.4 468.4,676.8 465.0,683.5 458.4,686.0 450.0,687.6 446.7,686.8 441.8,685.1 436.7,683.4 433.4,681.7 431.7,683.7 423.4,684.2 417.6,681.7 415.9,675.9 416.7,670.0 415.9,664.6 410.0,665.0 405.0,665.0 402.5,658.5 401.7,650.1 402.5,640.1 403.4,631.8 406.7,625.1 411.7,621.8 416.7,618.4 423.4,613.4 430.1,609.3 436.7,605.1 443.4,600.1 450.1,595.9" fill="#00ffff"/>
<polygon points="368.4,630.0 370.0,623.4 373.4,619.2 378.4,616.7 385.1,615.0 391.7,615.9 397.6,618.4 401.8,622.5 403.4,626.7 404.3,633.4 402.6,638.4 396.7,640.5 391.7,643.4 388.4,646.7 380.1,648.4 375.0,646.7 370.9,641.7 368.4,635.9" fill="#00ffff"/>
<polygon points="350.8,683.4 351.7,676.8 355.0,673.4 355.9,661.8 358.4,655.1 363.4,651.7 370.0,650.1 380.1,650.1 388.4,650.9 393.4,655.1 396.7,660.1 400.1,666.8 404.3,670.1 406.8,675.1 408.4,681.8 406.8,686.8 401.8,690.1 395.1,691.8 388.4,695.1 381.7,696.8 377.6,700.1 375.0,705.1 370.0,705.5 363.4,704.3 358.4,698.5 355.9,693.5 352.5,688.5" fill="#00ffff"/>
<polygon points="488.4,655.1 491.7,651.8 496.7,645.9 501.8,642.6 508.4,640.1 515.1,638.4 521.8,638.7 528.5,640.9 532.6,644.2 534.6,650.1 532.6,656.8 530.1,660.1 523.4,663.4 518.4,667.6 511.8,671.8 506.8,674.3 503.4,675.1 500.9,681.8 498.4,686.0 490.1,688.5 483.4,687.6 480.9,685.1 480.1,676.8 479.2,670.1 482.6,663.4 485.1,658.4" fill="#00ffff"/>
</g>
</g>
<g fill="none" stroke="#bebebe" stroke-width="1" shape-rendering="crispEdges"><path d="M331.4,408.3 L333.0,408.3 L334.6,408.4 L336.2,408.6 L337.9,408.7 L339.5,409.0 L341.0,409.3 L342.6,409.7 L344.2,410.1 L345.7,410.5 L347.3,411.1 L348.8,411.6 L350.3,412.3 L351.7,412.9 L353.2,413.7 L354.6,414.4 L356.0,415.3 L357.3,416.1 L358.7,417.1 L360.0,418.0 L361.2,419.0 L362.5,420.1 L363.6,421.2 L364.8,422.3 L365.9,423.5 L367.0,424.7 L368.0,425.9 L369.0,427.2 L369.9,428.5 L370.8,429.9 L371.6,431.2 L372.4,432.6 L373.1,434.1 L373.8,435.5 L374.5,437.0 L375.1,438.5 L375.6,440.0 L376.1,441.6 L376.5,443.1 L376.9,444.7 L377.2,446.2 L377.4,447.8 L377.6,449.4 L377.8,451.0 L377.9,452.6 L377.9,454.2 L377.9,455.8 L377.8,457.4 L377.7,459.0 L377.5,460.6 L377.2,462.2 L376.9,463.8 L376.5,465.4 L376.1,466.9 L375.7,468.4 L375.1,470.0 L374.6,471.5 L373.9,472.9 L373.2,474.4 L372.5,475.8 L371.7,477.2 L370.9,478.6 L370.0,480.0 L369.1,481.3 L368.1,482.6 L367.1,483.8 L366.0,485.0 L364.9,486.2 L363.8,487.4 L362.6,488.5 L361.4,489.5 L360.1,490.5 L358.8,491.5 L357.5,492.4 L356.1,493.3 L354.7,494.1 L353.3,494.9 L351.8,495.6 L350.4,496.3 L348.9,496.9 L347.3,497.5 L345.8,498.0 L344.3,498.5 L342.7,498.9 L341.1,499.3 L339.5,499.6 L337.9,499.9 L336.3,500.0 L334.7,500.2 L333.0,500.3 L331.4,500.3 L329.8,500.3 L328.1,500.2 L326.5,500.0 L324.9,499.9 L323.3,499.6 L321.7,499.3 L320.1,498.9 L318.5,498.5 L317.0,498.0 L315.5,497.5 L313.9,496.9 L312.4,496.3 L311.0,495.6 L309.5,494.9 L308.1,494.1 L306.7,493.3 L305.3,492.4 L304.0,491.5 L302.7,490.5 L301.4,489.5 L300.2,488.5 L299.0,487.4 L297.9,486.2 L296.8,485.0 L295.7,483.8 L294.7,482.6 L293.7,481.3 L292.8,480.0 L291.9,478.6 L291.1,477.2 L290.3,475.8 L289.6,474.4 L288.9,472.9 L288.2,471.5 L287.7,470.0 L287.1,468.4 L286.7,466.9 L286.3,465.4 L285.9,463.8 L285.6,462.2 L285.3,460.6 L285.1,459.0 L285.0,457.4 L284.9,455.8 L284.9,454.2 L284.9,452.6 L285.0,451.0 L285.2,449.4 L285.4,447.8 L285.6,446.2 L285.9,444.7 L286.3,443.1 L286.7,441.6 L287.2,440.0 L287.7,438.5 L288.3,437.0 L289.0,435.5 L289.7,434.1 L290.4,432.6 L291.2,431.2 L292.0,429.9 L292.9,428.5 L293.8,427.2 L294.8,425.9 L295.8,424.7 L296.9,423.5 L298.0,422.3 L299.2,421.2 L300.3,420.1 L301.6,419.0 L302.8,418.0 L304.1,417.1 L305.5,416.1 L306.8,415.3 L308.2,414.4 L309.6,413.7 L311.1,412.9 L312.5,412.3 L314.0,411.6 L315.5,411.1 L317.1,410.5 L318.6,410.1 L320.2,409.7 L321.8,409.3 L323.3,409.0 L324.9,408.7 L326.6,408.6 L328.2,408.4 L329.8,408.3 L331.4,408.3Z"/>
<path d="M331.4,362.3 L334.6,362.4 L337.9,362.5 L341.1,362.8 L344.3,363.2 L347.5,363.7 L350.6,364.3 L353.8,365.0 L356.9,365.8 L360.0,366.8 L363.0,367.8 L366.1,369.0 L369.0,370.2 L372.0,371.6 L374.8,373.0 L377.7,374.5 L380.5,376.2 L383.2,377.9 L385.8,379.8 L388.4,381.7 L390.9,383.7 L393.4,385.8 L395.7,388.0 L398.0,390.2 L400.3,392.6 L402.4,395.0 L404.4,397.5 L406.4,400.0 L408.3,402.6 L410.0,405.3 L411.7,408.1 L413.3,410.9 L414.8,413.7 L416.2,416.6 L417.4,419.6 L418.6,422.6 L419.7,425.6 L420.7,428.7 L421.5,431.8 L422.3,434.9 L422.9,438.0 L423.4,441.2 L423.8,444.4 L424.1,447.6 L424.3,450.8 L424.4,454.0 L424.4,457.2 L424.2,460.4 L423.9,463.6 L423.6,466.8 L423.1,470.0 L422.5,473.1 L421.8,476.3 L420.9,479.4 L420.0,482.5 L419.0,485.5 L417.8,488.5 L416.6,491.5 L415.2,494.4 L413.7,497.3 L412.2,500.1 L410.5,502.8 L408.7,505.5 L406.9,508.2 L404.9,510.8 L402.9,513.3 L400.8,515.7 L398.6,518.1 L396.3,520.3 L393.9,522.5 L391.4,524.7 L388.9,526.7 L386.3,528.6 L383.6,530.5 L380.9,532.2 L378.1,533.9 L375.3,535.5 L372.4,536.9 L369.4,538.3 L366.4,539.6 L363.4,540.7 L360.3,541.8 L357.2,542.7 L354.0,543.5 L350.8,544.3 L347.6,544.9 L344.4,545.4 L341.2,545.8 L337.9,546.1 L334.7,546.2 L331.4,546.3 L328.1,546.2 L324.9,546.1 L321.6,545.8 L318.4,545.4 L315.2,544.9 L312.0,544.3 L308.8,543.5 L305.6,542.7 L302.5,541.8 L299.4,540.7 L296.4,539.6 L293.4,538.3 L290.4,536.9 L287.5,535.5 L284.7,533.9 L281.9,532.2 L279.2,530.5 L276.5,528.6 L273.9,526.7 L271.4,524.7 L268.9,522.5 L266.5,520.3 L264.2,518.1 L262.0,515.7 L259.9,513.3 L257.9,510.8 L255.9,508.2 L254.1,505.5 L252.3,502.8 L250.6,500.1 L249.1,497.3 L247.6,494.4 L246.2,491.5 L245.0,488.5 L243.8,485.5 L242.8,482.5 L241.9,479.4 L241.0,476.3 L240.3,473.1 L239.7,470.0 L239.2,466.8 L238.9,463.6 L238.6,460.4 L238.4,457.2 L238.4,454.0 L238.5,450.8 L238.7,447.6 L239.0,444.4 L239.4,441.2 L239.9,438.0 L240.5,434.9 L241.3,431.8 L242.1,428.7 L243.1,425.6 L244.2,422.6 L245.4,419.6 L246.6,416.6 L248.0,413.7 L249.5,410.9 L251.1,408.1 L252.8,405.3 L254.5,402.6 L256.4,400.0 L258.4,397.5 L260.4,395.0 L262.5,392.6 L264.8,390.2 L267.1,388.0 L269.4,385.8 L271.9,383.7 L274.4,381.7 L277.0,379.8 L279.6,377.9 L282.3,376.2 L285.1,374.5 L288.0,373.0 L290.8,371.6 L293.8,370.2 L296.7,369.0 L299.8,367.8 L302.8,366.8 L305.9,365.8 L309.0,365.0 L312.2,364.3 L315.3,363.7 L318.5,363.2 L321.7,362.8 L324.9,362.5 L328.2,362.4 L331.4,362.3Z"/>
<path d="M331.4,316.3 L336.2,316.4 L341.1,316.6 L345.9,317.0 L350.7,317.6 L355.4,318.4 L360.2,319.3 L364.9,320.4 L369.5,321.6 L374.2,323.0 L378.7,324.5 L383.3,326.3 L387.7,328.1 L392.1,330.1 L396.4,332.3 L400.6,334.6 L404.8,337.1 L408.9,339.7 L412.8,342.4 L416.7,345.3 L420.5,348.3 L424.2,351.4 L427.7,354.7 L431.2,358.1 L434.5,361.6 L437.7,365.2 L440.8,368.9 L443.7,372.7 L446.5,376.7 L449.2,380.7 L451.7,384.8 L454.1,389.0 L456.3,393.3 L458.4,397.6 L460.3,402.0 L462.1,406.5 L463.7,411.0 L465.2,415.6 L466.5,420.3 L467.6,425.0 L468.6,429.7 L469.4,434.4 L470.0,439.2 L470.5,444.0 L470.8,448.8 L470.9,453.6 L470.9,458.4 L470.6,463.2 L470.3,468.1 L469.7,472.8 L469.0,477.6 L468.1,482.3 L467.0,487.0 L465.8,491.7 L464.4,496.3 L462.9,500.9 L461.1,505.4 L459.3,509.9 L457.2,514.2 L455.0,518.6 L452.7,522.8 L450.2,526.9 L447.6,531.0 L444.8,535.0 L441.9,538.8 L438.8,542.6 L435.6,546.3 L432.3,549.8 L428.9,553.2 L425.3,556.5 L421.6,559.7 L417.8,562.8 L413.9,565.7 L409.9,568.5 L405.8,571.1 L401.7,573.6 L397.4,576.0 L393.0,578.2 L388.6,580.3 L384.1,582.2 L379.5,583.9 L374.8,585.5 L370.2,586.9 L365.4,588.2 L360.6,589.3 L355.8,590.2 L351.0,590.9 L346.1,591.5 L341.2,592.0 L336.3,592.2 L331.4,592.3 L326.5,592.2 L321.6,592.0 L316.7,591.5 L311.8,590.9 L307.0,590.2 L302.2,589.3 L297.4,588.2 L292.6,586.9 L288.0,585.5 L283.3,583.9 L278.7,582.2 L274.2,580.3 L269.8,578.2 L265.4,576.0 L261.1,573.6 L257.0,571.1 L252.9,568.5 L248.9,565.7 L245.0,562.8 L241.2,559.7 L237.5,556.5 L233.9,553.2 L230.5,549.8 L227.2,546.3 L224.0,542.6 L220.9,538.8 L218.0,535.0 L215.2,531.0 L212.6,526.9 L210.1,522.8 L207.8,518.6 L205.6,514.2 L203.5,509.9 L201.7,505.4 L199.9,500.9 L198.4,496.3 L197.0,491.7 L195.8,487.0 L194.7,482.3 L193.8,477.6 L193.1,472.8 L192.5,468.1 L192.2,463.2 L191.9,458.4 L191.9,453.6 L192.0,448.8 L192.3,444.0 L192.8,439.2 L193.4,434.4 L194.2,429.7 L195.2,425.0 L196.3,420.3 L197.6,415.6 L199.1,411.0 L200.7,406.5 L202.5,402.0 L204.4,397.6 L206.5,393.3 L208.7,389.0 L211.1,384.8 L213.6,380.7 L216.3,376.7 L219.1,372.7 L222.0,368.9 L225.1,365.2 L228.3,361.6 L231.6,358.1 L235.1,354.7 L238.6,351.4 L242.3,348.3 L246.1,345.3 L250.0,342.4 L253.9,339.7 L258.0,337.1 L262.2,334.6 L266.4,332.3 L270.7,330.1 L275.1,328.1 L279.5,326.3 L284.1,324.5 L288.6,323.0 L293.3,321.6 L297.9,320.4 L302.6,319.3 L307.4,318.4 L312.1,317.6 L316.9,317.0 L321.7,316.6 L326.6,316.4 L331.4,316.3Z"/>
<path d="M331.4,270.3 L337.8,270.4 L344.2,270.7 L350.6,271.3 L357.0,272.1 L363.3,273.1 L369.7,274.3 L375.9,275.7 L382.1,277.3 L388.3,279.2 L394.4,281.3 L400.4,283.5 L406.3,286.0 L412.1,288.7 L417.9,291.6 L423.5,294.6 L429.0,297.9 L434.5,301.4 L439.8,305.0 L444.9,308.8 L449.9,312.8 L454.8,317.0 L459.6,321.4 L464.2,325.9 L468.6,330.5 L472.9,335.3 L477.0,340.3 L480.9,345.4 L484.6,350.6 L488.2,355.9 L491.6,361.4 L494.8,367.0 L497.8,372.7 L500.6,378.4 L503.1,384.3 L505.5,390.3 L507.7,396.3 L509.7,402.5 L511.4,408.6 L512.9,414.9 L514.2,421.2 L515.3,427.5 L516.2,433.9 L516.8,440.3 L517.2,446.7 L517.4,453.1 L517.4,459.5 L517.1,465.9 L516.6,472.3 L515.9,478.7 L514.9,485.1 L513.8,491.4 L512.4,497.7 L510.7,503.9 L508.9,510.1 L506.8,516.2 L504.6,522.2 L502.1,528.1 L499.4,534.0 L496.5,539.7 L493.4,545.4 L490.1,550.9 L486.6,556.4 L482.9,561.7 L479.0,566.8 L474.9,571.9 L470.6,576.8 L466.2,581.5 L461.6,586.1 L456.9,590.5 L452.0,594.8 L446.9,598.8 L441.7,602.7 L436.4,606.5 L430.9,610.0 L425.3,613.3 L419.6,616.5 L413.7,619.4 L407.8,622.2 L401.8,624.7 L395.7,627.1 L389.5,629.2 L383.2,631.1 L376.9,632.8 L370.5,634.2 L364.0,635.5 L357.6,636.5 L351.1,637.3 L344.5,637.8 L338.0,638.2 L331.4,638.3 L324.8,638.2 L318.3,637.8 L311.7,637.3 L305.2,636.5 L298.8,635.5 L292.3,634.2 L285.9,632.8 L279.6,631.1 L273.3,629.2 L267.1,627.1 L261.0,624.7 L255.0,622.2 L249.1,619.4 L243.2,616.5 L237.5,613.3 L231.9,610.0 L226.4,606.5 L221.1,602.7 L215.9,598.8 L210.8,594.8 L205.9,590.5 L201.2,586.1 L196.6,581.5 L192.2,576.8 L187.9,571.9 L183.8,566.8 L179.9,561.7 L176.2,556.4 L172.7,550.9 L169.4,545.4 L166.3,539.7 L163.4,534.0 L160.7,528.1 L158.2,522.2 L156.0,516.2 L153.9,510.1 L152.1,503.9 L150.4,497.7 L149.0,491.4 L147.9,485.1 L146.9,478.7 L146.2,472.3 L145.7,465.9 L145.4,459.5 L145.4,453.1 L145.6,446.7 L146.0,440.3 L146.6,433.9 L147.5,427.5 L148.6,421.2 L149.9,414.9 L151.4,408.6 L153.1,402.5 L155.1,396.3 L157.3,390.3 L159.7,384.3 L162.2,378.4 L165.0,372.7 L168.0,367.0 L171.2,361.4 L174.6,355.9 L178.2,350.6 L181.9,345.4 L185.8,340.3 L189.9,335.3 L194.2,330.5 L198.6,325.9 L203.2,321.4 L208.0,317.0 L212.9,312.8 L217.9,308.8 L223.0,305.0 L228.3,301.4 L233.8,297.9 L239.3,294.6 L244.9,291.6 L250.7,288.7 L256.5,286.0 L262.4,283.5 L268.4,281.3 L274.5,279.2 L280.7,277.3 L286.9,275.7 L293.1,274.3 L299.5,273.1 L305.8,272.1 L312.2,271.3 L318.6,270.7 L325.0,270.4 L331.4,270.3Z"/>
<path d="M331.4,224.3 L339.4,224.4 L347.4,224.9 L355.4,225.5 L363.3,226.5 L371.2,227.7 L379.1,229.2 L386.9,231.0 L394.6,233.1 L402.3,235.4 L409.9,237.9 L417.4,240.8 L424.8,243.9 L432.1,247.2 L439.2,250.8 L446.3,254.6 L453.2,258.7 L459.9,263.0 L466.5,267.6 L473.0,272.3 L479.3,277.3 L485.4,282.5 L491.3,287.9 L497.0,293.5 L502.6,299.4 L507.9,305.3 L513.1,311.5 L518.0,317.9 L522.7,324.4 L527.1,331.1 L531.4,337.9 L535.4,344.8 L539.1,351.9 L542.6,359.2 L545.9,366.5 L548.8,374.0 L551.6,381.5 L554.0,389.2 L556.2,396.9 L558.2,404.7 L559.8,412.5 L561.2,420.4 L562.3,428.4 L563.1,436.4 L563.6,444.4 L563.9,452.4 L563.9,460.4 L563.6,468.5 L563.0,476.5 L562.1,484.5 L560.9,492.4 L559.5,500.3 L557.7,508.2 L555.7,515.9 L553.5,523.7 L550.9,531.3 L548.1,538.8 L545.0,546.3 L541.6,553.6 L538.0,560.8 L534.1,567.9 L530.0,574.8 L525.6,581.6 L521.0,588.3 L516.2,594.7 L511.1,601.0 L505.8,607.2 L500.2,613.1 L494.5,618.8 L488.6,624.4 L482.4,629.7 L476.1,634.8 L469.6,639.7 L462.9,644.4 L456.0,648.8 L449.0,653.0 L441.9,657.0 L434.6,660.7 L427.2,664.1 L419.6,667.3 L412.0,670.2 L404.2,672.9 L396.3,675.2 L388.4,677.4 L380.4,679.2 L372.3,680.7 L364.2,682.0 L356.0,683.0 L347.8,683.7 L339.6,684.2 L331.4,684.3 L323.2,684.2 L315.0,683.7 L306.8,683.0 L298.6,682.0 L290.5,680.7 L282.4,679.2 L274.4,677.4 L266.5,675.2 L258.6,672.9 L250.8,670.2 L243.2,667.3 L235.6,664.1 L228.2,660.7 L220.9,657.0 L213.8,653.0 L206.8,648.8 L199.9,644.4 L193.2,639.7 L186.7,634.8 L180.4,629.7 L174.2,624.4 L168.3,618.8 L162.6,613.1 L157.0,607.2 L151.7,601.0 L146.6,594.7 L141.8,588.3 L137.2,581.6 L132.8,574.8 L128.7,567.9 L124.8,560.8 L121.2,553.6 L117.8,546.3 L114.7,538.8 L111.9,531.3 L109.3,523.7 L107.1,515.9 L105.1,508.2 L103.3,500.3 L101.9,492.4 L100.7,484.5 L99.8,476.5 L99.2,468.5 L98.9,460.4 L98.9,452.4 L99.2,444.4 L99.7,436.4 L100.5,428.4 L101.6,420.4 L103.0,412.5 L104.6,404.7 L106.6,396.9 L108.8,389.2 L111.2,381.5 L114.0,374.0 L116.9,366.5 L120.2,359.2 L123.7,351.9 L127.4,344.8 L131.4,337.9 L135.7,331.1 L140.1,324.4 L144.8,317.9 L149.7,311.5 L154.9,305.3 L160.2,299.4 L165.8,293.5 L171.5,287.9 L177.4,282.5 L183.5,277.3 L189.8,272.3 L196.3,267.6 L202.9,263.0 L209.6,258.7 L216.5,254.6 L223.6,250.8 L230.7,247.2 L238.0,243.9 L245.4,240.8 L252.9,237.9 L260.5,235.4 L268.2,233.1 L275.9,231.0 L283.7,229.2 L291.6,227.7 L299.5,226.5 L307.4,225.5 L315.4,224.9 L323.4,224.4 L331.4,224.3Z"/>
<path d="M331.4,178.3 L341.0,178.5 L350.5,179.0 L360.1,179.8 L369.6,180.9 L379.1,182.4 L388.5,184.2 L397.8,186.3 L407.1,188.8 L416.3,191.5 L425.3,194.6 L434.3,198.0 L443.2,201.7 L451.9,205.7 L460.5,210.0 L468.9,214.6 L477.2,219.5 L485.3,224.6 L493.2,230.1 L500.9,235.8 L508.5,241.7 L515.8,248.0 L522.9,254.4 L529.8,261.2 L536.4,268.1 L542.9,275.3 L549.0,282.7 L554.9,290.3 L560.6,298.1 L565.9,306.1 L571.0,314.3 L575.8,322.6 L580.3,331.1 L584.6,339.8 L588.5,348.6 L592.1,357.5 L595.4,366.5 L598.4,375.7 L601.0,385.0 L603.4,394.3 L605.4,403.7 L607.0,413.2 L608.4,422.8 L609.4,432.3 L610.1,441.9 L610.4,451.6 L610.4,461.2 L610.0,470.8 L609.4,480.5 L608.3,490.0 L607.0,499.6 L605.2,509.1 L603.2,518.5 L600.8,527.9 L598.1,537.1 L595.1,546.3 L591.7,555.3 L588.0,564.3 L584.0,573.1 L579.7,581.8 L575.0,590.3 L570.1,598.6 L564.8,606.8 L559.3,614.7 L553.5,622.5 L547.4,630.1 L541.0,637.5 L534.4,644.6 L527.5,651.5 L520.4,658.2 L513.0,664.6 L505.4,670.8 L497.6,676.6 L489.6,682.3 L481.3,687.6 L472.9,692.6 L464.3,697.4 L455.5,701.8 L446.6,706.0 L437.5,709.8 L428.3,713.3 L419.0,716.5 L409.5,719.4 L400.0,721.9 L390.3,724.2 L380.6,726.0 L370.9,727.6 L361.0,728.8 L351.2,729.6 L341.3,730.1 L331.4,730.3 L321.5,730.1 L311.6,729.6 L301.8,728.8 L291.9,727.6 L282.2,726.0 L272.5,724.2 L262.8,721.9 L253.3,719.4 L243.8,716.5 L234.5,713.3 L225.3,709.8 L216.2,706.0 L207.3,701.8 L198.5,697.4 L189.9,692.6 L181.5,687.6 L173.2,682.3 L165.2,676.6 L157.4,670.8 L149.8,664.6 L142.4,658.2 L135.3,651.5 L128.4,644.6 L121.8,637.5 L115.4,630.1 L109.3,622.5 L103.5,614.7 L98.0,606.8 L92.7,598.6 L87.8,590.3 L83.1,581.8 L78.8,573.1 L74.8,564.3 L71.1,555.3 L67.7,546.3 L64.7,537.1 L62.0,527.9 L59.6,518.5 L57.6,509.1 L55.8,499.6 L54.5,490.0 L53.4,480.5 L52.8,470.8 L52.4,461.2 L52.4,451.6 L52.7,441.9 L53.4,432.3 L54.4,422.8 L55.8,413.2 L57.4,403.7 L59.4,394.3 L61.8,385.0 L64.4,375.7 L67.4,366.5 L70.7,357.5 L74.3,348.6 L78.2,339.8 L82.5,331.1 L87.0,322.6 L91.8,314.3 L96.9,306.1 L102.2,298.1 L107.9,290.3 L113.8,282.7 L119.9,275.3 L126.4,268.1 L133.0,261.2 L139.9,254.4 L147.0,248.0 L154.3,241.7 L161.9,235.8 L169.6,230.1 L177.5,224.6 L185.6,219.5 L193.9,214.6 L202.3,210.0 L210.9,205.7 L219.6,201.7 L228.5,198.0 L237.5,194.6 L246.5,191.5 L255.7,188.8 L265.0,186.3 L274.3,184.2 L283.7,182.4 L293.2,180.9 L302.7,179.8 L312.3,179.0 L321.8,178.5 L331.4,178.3Z"/>
<path d="M331.4,132.3 L342.5,132.5 L353.7,133.1 L364.8,134.0 L375.8,135.4 L386.8,137.1 L397.8,139.2 L408.7,141.6 L419.5,144.5 L430.1,147.7 L440.7,151.3 L451.2,155.2 L461.5,159.5 L471.6,164.2 L481.6,169.2 L491.4,174.5 L501.1,180.2 L510.5,186.2 L519.7,192.5 L528.7,199.2 L537.5,206.1 L546.1,213.3 L554.4,220.9 L562.4,228.7 L570.2,236.8 L577.7,245.1 L584.8,253.8 L591.7,262.6 L598.3,271.7 L604.6,281.0 L610.6,290.5 L616.2,300.2 L621.5,310.1 L626.4,320.2 L631.0,330.5 L635.2,340.9 L639.1,351.4 L642.6,362.1 L645.8,372.9 L648.5,383.8 L650.9,394.8 L652.9,405.8 L654.5,417.0 L655.7,428.1 L656.5,439.4 L656.9,450.6 L656.9,461.8 L656.5,473.1 L655.8,484.3 L654.6,495.5 L653.0,506.6 L651.1,517.7 L648.7,528.7 L646.0,539.6 L642.8,550.4 L639.3,561.2 L635.4,571.7 L631.1,582.2 L626.4,592.5 L621.4,602.6 L616.0,612.5 L610.3,622.3 L604.2,631.8 L597.7,641.1 L590.9,650.2 L583.8,659.1 L576.4,667.7 L568.7,676.1 L560.7,684.1 L552.3,691.9 L543.7,699.4 L534.8,706.6 L525.7,713.5 L516.3,720.1 L506.7,726.3 L496.9,732.2 L486.8,737.8 L476.6,743.0 L466.1,747.8 L455.5,752.3 L444.7,756.4 L433.8,760.2 L422.8,763.5 L411.6,766.5 L400.4,769.1 L389.0,771.3 L377.6,773.1 L366.1,774.5 L354.5,775.5 L343.0,776.1 L331.4,776.3 L319.8,776.1 L308.3,775.5 L296.7,774.5 L285.2,773.1 L273.8,771.3 L262.4,769.1 L251.2,766.5 L240.0,763.5 L229.0,760.2 L218.1,756.4 L207.3,752.3 L196.7,747.8 L186.2,743.0 L176.0,737.8 L165.9,732.2 L156.1,726.3 L146.5,720.1 L137.1,713.5 L128.0,706.6 L119.1,699.4 L110.5,691.9 L102.1,684.1 L94.1,676.1 L86.4,667.7 L79.0,659.1 L71.9,650.2 L65.1,641.1 L58.6,631.8 L52.5,622.3 L46.8,612.5 L41.4,602.6 L36.4,592.5 L31.7,582.2 L27.4,571.7 L23.5,561.2 L20.0,550.4 L16.8,539.6 L14.1,528.7 L11.7,517.7 L9.8,506.6 L8.2,495.5 L7.0,484.3 L6.3,473.1 L5.9,461.8 L5.9,450.6 L6.3,439.4 L7.1,428.1 L8.3,417.0 L9.9,405.8 L11.9,394.8 L14.3,383.8 L17.0,372.9 L20.2,362.1 L23.7,351.4 L27.6,340.9 L31.8,330.5 L36.4,320.2 L41.3,310.1 L46.6,300.2 L52.2,290.5 L58.2,281.0 L64.5,271.7 L71.1,262.6 L78.0,253.8 L85.1,245.1 L92.6,236.8 L100.4,228.7 L108.4,220.9 L116.7,213.3 L125.3,206.1 L134.1,199.2 L143.1,192.5 L152.3,186.2 L161.7,180.2 L171.4,174.5 L181.2,169.2 L191.2,164.2 L201.3,159.5 L211.6,155.2 L222.1,151.3 L232.7,147.7 L243.3,144.5 L254.1,141.6 L265.0,139.2 L276.0,137.1 L287.0,135.4 L298.0,134.0 L309.1,133.1 L320.3,132.5 L331.4,132.3Z"/>
<path d="M331.4,86.3 L344.1,86.5 L356.8,87.2 L369.4,88.3 L382.0,89.8 L394.6,91.7 L407.1,94.1 L419.5,96.9 L431.8,100.2 L443.9,103.8 L456.0,107.9 L467.9,112.4 L479.7,117.3 L491.2,122.6 L502.6,128.3 L513.8,134.4 L524.8,140.9 L535.6,147.7 L546.2,154.9 L556.4,162.5 L566.5,170.4 L576.2,178.7 L585.7,187.2 L594.9,196.2 L603.8,205.4 L612.3,214.9 L620.6,224.7 L628.4,234.8 L636.0,245.2 L643.2,255.8 L650.0,266.7 L656.5,277.8 L662.5,289.1 L668.2,300.6 L673.5,312.3 L678.3,324.2 L682.8,336.2 L686.8,348.4 L690.4,360.7 L693.6,373.2 L696.3,385.7 L698.6,398.3 L700.5,411.0 L701.9,423.8 L702.9,436.6 L703.4,449.5 L703.5,462.3 L703.1,475.2 L702.2,488.0 L700.9,500.8 L699.2,513.5 L696.9,526.2 L694.3,538.8 L691.2,551.3 L687.6,563.6 L683.6,575.9 L679.2,588.0 L674.3,599.9 L669.0,611.7 L663.3,623.3 L657.1,634.7 L650.6,645.8 L643.6,656.8 L636.3,667.4 L628.5,677.9 L620.4,688.0 L611.9,697.9 L603.1,707.4 L593.9,716.7 L584.4,725.6 L574.6,734.2 L564.4,742.5 L554.0,750.3 L543.2,757.9 L532.2,765.0 L521.0,771.8 L509.4,778.2 L497.7,784.1 L485.8,789.7 L473.6,794.8 L461.3,799.5 L448.8,803.8 L436.1,807.7 L423.3,811.1 L410.4,814.0 L397.4,816.6 L384.3,818.6 L371.1,820.2 L357.9,821.4 L344.7,822.1 L331.4,822.3 L318.1,822.1 L304.9,821.4 L291.7,820.2 L278.5,818.6 L265.4,816.6 L252.4,814.0 L239.5,811.1 L226.7,807.7 L214.0,803.8 L201.5,799.5 L189.2,794.8 L177.0,789.7 L165.1,784.1 L153.4,778.2 L141.8,771.8 L130.6,765.0 L119.6,757.9 L108.8,750.3 L98.4,742.5 L88.2,734.2 L78.4,725.6 L68.9,716.7 L59.7,707.4 L50.9,697.9 L42.4,688.0 L34.3,677.9 L26.5,667.4 L19.2,656.8 L12.2,645.8 L5.7,634.7 L-0.5,623.3 L-6.2,611.7 L-11.5,599.9 L-16.4,588.0 L-20.8,575.9 L-24.8,563.6 L-28.4,551.3 L-31.5,538.8 L-34.1,526.2 L-36.4,513.5 L-38.1,500.8 L-39.4,488.0 L-40.3,475.2 L-40.7,462.3 L-40.6,449.5 L-40.1,436.6 L-39.1,423.8 L-37.7,411.0 L-35.8,398.3 L-33.5,385.7 L-30.8,373.2 L-27.6,360.7 L-24.0,348.4 L-20.0,336.2 L-15.5,324.2 L-10.7,312.3 L-5.4,300.6 L0.3,289.1 L6.3,277.8 L12.8,266.7 L19.6,255.8 L26.8,245.2 L34.4,234.8 L42.2,224.7 L50.5,214.9 L59.0,205.4 L67.9,196.2 L77.1,187.2 L86.6,178.7 L96.3,170.4 L106.4,162.5 L116.6,154.9 L127.2,147.7 L138.0,140.9 L149.0,134.4 L160.2,128.3 L171.6,122.6 L183.1,117.3 L194.9,112.4 L206.8,107.9 L218.9,103.8 L231.0,100.2 L243.3,96.9 L255.7,94.1 L268.2,91.7 L280.8,89.8 L293.4,88.3 L306.0,87.2 L318.7,86.5 L331.4,86.3Z"/>
<path d="M331.4,40.3 L345.6,40.5 L359.9,41.3 L374.1,42.5 L388.2,44.2 L402.3,46.4 L416.3,49.1 L430.2,52.2 L444.0,55.9 L457.7,60.0 L471.2,64.6 L484.6,69.6 L497.8,75.1 L510.8,81.0 L523.6,87.4 L536.1,94.2 L548.5,101.5 L560.6,109.2 L572.4,117.2 L584.0,125.7 L595.3,134.6 L606.3,143.9 L616.9,153.5 L627.2,163.5 L637.2,173.9 L646.9,184.6 L656.1,195.6 L665.0,206.9 L673.5,218.6 L681.6,230.5 L689.3,242.7 L696.6,255.2 L703.4,267.9 L709.9,280.8 L715.8,293.9 L721.3,307.3 L726.4,320.8 L730.9,334.5 L735.0,348.4 L738.6,362.4 L741.8,376.5 L744.4,390.7 L746.5,405.0 L748.2,419.3 L749.3,433.7 L749.9,448.2 L750.0,462.6 L749.6,477.1 L748.7,491.5 L747.3,505.9 L745.3,520.2 L742.9,534.5 L739.9,548.7 L736.4,562.7 L732.5,576.7 L728.0,590.5 L723.0,604.1 L717.6,617.6 L711.6,630.8 L705.2,643.9 L698.3,656.7 L691.0,669.3 L683.2,681.6 L674.9,693.6 L666.2,705.4 L657.1,716.8 L647.6,727.9 L637.6,738.7 L627.3,749.1 L616.6,759.2 L605.5,768.9 L594.1,778.2 L582.3,787.1 L570.2,795.6 L557.8,803.7 L545.2,811.3 L532.2,818.5 L519.0,825.2 L505.5,831.5 L491.8,837.3 L477.9,842.6 L463.8,847.5 L449.5,851.8 L435.1,855.6 L420.5,859.0 L405.8,861.8 L391.1,864.2 L376.2,866.0 L361.3,867.3 L346.4,868.0 L331.4,868.3 L316.4,868.0 L301.5,867.3 L286.6,866.0 L271.7,864.2 L257.0,861.8 L242.3,859.0 L227.7,855.6 L213.3,851.8 L199.0,847.5 L184.9,842.6 L171.0,837.3 L157.3,831.5 L143.8,825.2 L130.6,818.5 L117.6,811.3 L105.0,803.7 L92.6,795.6 L80.5,787.1 L68.7,778.2 L57.3,768.9 L46.2,759.2 L35.5,749.1 L25.2,738.7 L15.2,727.9 L5.7,716.8 L-3.4,705.4 L-12.1,693.6 L-20.4,681.6 L-28.2,669.3 L-35.5,656.7 L-42.4,643.9 L-48.8,630.8 L-54.8,617.6 L-60.2,604.1 L-65.2,590.5 L-69.7,576.7 L-73.6,562.7 L-77.1,548.7 L-80.1,534.5 L-82.5,520.2 L-84.5,505.9 L-85.9,491.5 L-86.8,477.1 L-87.2,462.6 L-87.1,448.2 L-86.5,433.7 L-85.4,419.3 L-83.7,405.0 L-81.6,390.7 L-79.0,376.5 L-75.8,362.4 L-72.2,348.4 L-68.1,334.5 L-63.6,320.8 L-58.5,307.3 L-53.0,293.9 L-47.1,280.8 L-40.6,267.9 L-33.8,255.2 L-26.5,242.7 L-18.8,230.5 L-10.7,218.6 L-2.2,206.9 L6.7,195.6 L15.9,184.6 L25.6,173.9 L35.6,163.5 L45.9,153.5 L56.5,143.9 L67.5,134.6 L78.8,125.7 L90.4,117.2 L102.2,109.2 L114.3,101.5 L126.7,94.2 L139.2,87.4 L152.0,81.0 L165.0,75.1 L178.2,69.6 L191.6,64.6 L205.1,60.0 L218.8,55.9 L232.6,52.2 L246.5,49.1 L260.5,46.4 L274.6,44.2 L288.7,42.5 L302.9,41.3 L317.2,40.5 L331.4,40.3Z"/>
<path d="M331.4,-5.7 L347.2,-5.4 L362.9,-4.6 L378.7,-3.3 L394.3,-1.4 L410.0,1.1 L425.5,4.0 L440.9,7.5 L456.2,11.5 L471.3,16.1 L486.3,21.2 L501.1,26.7 L515.8,32.8 L530.2,39.4 L544.4,46.5 L558.3,54.0 L572.0,62.1 L585.5,70.6 L598.6,79.5 L611.5,88.9 L624.0,98.8 L636.2,109.1 L648.0,119.8 L659.5,130.8 L670.6,142.3 L681.3,154.2 L691.6,166.4 L701.5,179.0 L711.0,191.9 L720.0,205.1 L728.5,218.6 L736.7,232.4 L744.3,246.5 L751.4,260.9 L758.1,275.5 L764.2,290.3 L769.9,305.3 L775.0,320.5 L779.6,335.9 L783.6,351.4 L787.1,367.1 L790.1,382.9 L792.5,398.7 L794.4,414.7 L795.7,430.7 L796.4,446.7 L796.6,462.8 L796.2,478.9 L795.2,494.9 L793.6,510.9 L791.5,526.8 L788.8,542.7 L785.6,558.5 L781.8,574.1 L777.4,589.6 L772.5,604.9 L767.0,620.1 L761.0,635.1 L754.4,649.8 L747.3,664.4 L739.7,678.6 L731.5,692.6 L722.9,706.3 L713.7,719.7 L704.1,732.8 L693.9,745.5 L683.3,757.9 L672.3,769.9 L660.8,781.5 L648.9,792.8 L636.6,803.6 L623.9,813.9 L610.8,823.8 L597.4,833.3 L583.6,842.3 L569.5,850.8 L555.0,858.8 L540.3,866.3 L525.3,873.3 L510.0,879.7 L494.6,885.7 L478.9,891.1 L463.0,895.9 L446.9,900.2 L430.7,903.9 L414.3,907.1 L397.9,909.7 L381.3,911.7 L364.7,913.1 L348.1,914.0 L331.4,914.3 L314.7,914.0 L298.1,913.1 L281.5,911.7 L264.9,909.7 L248.5,907.1 L232.1,903.9 L215.9,900.2 L199.8,895.9 L183.9,891.1 L168.2,885.7 L152.8,879.7 L137.5,873.3 L122.5,866.3 L107.8,858.8 L93.3,850.8 L79.2,842.3 L65.4,833.3 L52.0,823.8 L38.9,813.9 L26.2,803.6 L13.9,792.8 L2.0,781.5 L-9.5,769.9 L-20.5,757.9 L-31.1,745.5 L-41.3,732.8 L-50.9,719.7 L-60.1,706.3 L-68.7,692.6 L-76.9,678.6 L-84.5,664.4 L-91.6,649.8 L-98.2,635.1 L-104.2,620.1 L-109.7,604.9 L-114.6,589.6 L-119.0,574.1 L-122.8,558.5 L-126.0,542.7 L-128.7,526.8 L-130.8,510.9 L-132.4,494.9 L-133.4,478.9 L-133.8,462.8 L-133.6,446.7 L-132.9,430.7 L-131.6,414.7 L-129.7,398.7 L-127.3,382.9 L-124.3,367.1 L-120.8,351.4 L-116.8,335.9 L-112.2,320.5 L-107.1,305.3 L-101.4,290.3 L-95.3,275.5 L-88.6,260.9 L-81.5,246.5 L-73.9,232.4 L-65.7,218.6 L-57.2,205.1 L-48.2,191.9 L-38.7,179.0 L-28.8,166.4 L-18.5,154.2 L-7.8,142.3 L3.3,130.8 L14.8,119.8 L26.6,109.1 L38.8,98.8 L51.3,88.9 L64.2,79.5 L77.3,70.6 L90.8,62.1 L104.5,54.0 L118.4,46.5 L132.6,39.4 L147.0,32.8 L161.7,26.7 L176.5,21.2 L191.5,16.1 L206.6,11.5 L221.9,7.5 L237.3,4.0 L252.8,1.1 L268.5,-1.4 L284.1,-3.3 L299.9,-4.6 L315.6,-5.4 L331.4,-5.7Z"/>
<path d="M331.4,454.3 L331.4,417.5 L331.4,380.7 L331.4,343.9 L331.4,307.1 L331.4,270.3 L331.4,233.5 L331.4,196.7 L331.4,159.9 L331.4,123.1 L331.4,86.3 L331.4,49.5 L331.4,12.7 L331.4,-24.1 L331.4,-60.9 L331.4,-97.7 L331.4,-134.5 L331.4,-171.3 L331.4,-208.1 L331.4,-244.9 L331.4,-281.7 L331.4,-318.5 L331.4,-355.3 L331.4,-392.1 L331.4,-428.9 L331.4,-465.7"/>
<path d="M331.4,454.3 L350.0,422.4 L368.5,390.5 L386.9,358.6 L405.2,326.6 L423.5,294.6 L441.7,262.6 L459.9,230.6 L477.9,198.6 L495.9,166.5 L513.8,134.4 L531.7,102.3 L549.5,70.1 L567.2,37.9 L584.8,5.8 L602.4,-26.5 L619.9,-58.7 L637.3,-91.0 L654.7,-123.3 L672.0,-155.6 L689.2,-187.9 L706.3,-220.3 L723.4,-252.7 L740.4,-285.1 L757.3,-317.5 L774.2,-350.0"/>
<path d="M331.4,454.3 L363.6,435.9 L395.7,417.4 L427.7,398.8 L459.7,380.1 L491.6,361.4 L523.4,342.6 L555.2,323.7 L586.9,304.8 L618.5,285.8 L650.0,266.7 L681.5,247.5 L712.9,228.3 L744.2,209.0 L775.5,189.6 L806.6,170.1 L837.8,150.6 L868.8,131.0 L899.8,111.3 L930.7,91.6 L961.5,71.8 L992.3,51.9 L1022.9,31.9 L1053.6,11.9 L1084.1,-8.2 L1114.6,-28.4"/>
<path d="M331.4,454.3 L368.6,454.3 L405.8,454.1 L443.0,453.9 L480.2,453.5 L517.4,453.1 L554.6,452.6 L591.8,451.9 L629.0,451.2 L666.2,450.4 L703.4,449.5 L740.6,448.4 L777.8,447.3 L815.0,446.1 L852.2,444.8 L889.4,443.4 L926.6,441.9 L963.8,440.3 L1001.0,438.6 L1038.2,436.8 L1075.4,434.9 L1112.6,432.9 L1149.8,430.9 L1187.0,428.7 L1224.2,426.4 L1261.4,424.0"/>
<path d="M331.4,454.3 L363.7,472.7 L396.0,491.0 L428.4,509.2 L460.8,527.3 L493.4,545.4 L526.0,563.4 L558.7,581.3 L591.4,599.2 L624.2,617.0 L657.1,634.7 L690.1,652.3 L723.1,669.9 L756.2,687.4 L789.4,704.8 L822.6,722.1 L856.0,739.4 L889.4,756.6 L922.8,773.7 L956.3,790.8 L989.9,807.8 L1023.6,824.7 L1057.4,841.5 L1091.2,858.3 L1125.1,875.0 L1159.0,891.6"/>
<path d="M331.4,454.3 L350.0,486.2 L368.7,518.0 L387.5,549.8 L406.4,581.6 L425.3,613.3 L444.3,645.1 L463.3,676.8 L482.5,708.5 L501.7,740.1 L521.0,771.8 L540.3,803.4 L559.7,835.0 L579.2,866.6 L598.8,898.1 L618.4,929.6 L638.1,961.1 L657.9,992.6 L677.7,1024.0 L697.6,1055.5 L717.6,1086.9 L737.7,1118.2 L757.8,1149.6 L778.0,1180.9 L798.3,1212.2 L818.6,1243.5"/>
<path d="M331.4,454.3 L331.4,491.1 L331.4,527.9 L331.4,564.7 L331.4,601.5 L331.4,638.3 L331.4,675.1 L331.4,711.9 L331.4,748.7 L331.4,785.5 L331.4,822.3 L331.4,859.1 L331.4,895.9 L331.4,932.7 L331.4,969.5 L331.4,1006.3 L331.4,1043.1 L331.4,1079.9 L331.4,1116.7 L331.4,1153.5 L331.4,1190.3 L331.4,1227.1 L331.4,1263.9 L331.4,1300.7 L331.4,1337.5 L331.4,1374.3"/>
<path d="M331.4,454.3 L312.8,486.2 L294.1,518.0 L275.3,549.8 L256.4,581.6 L237.5,613.3 L218.5,645.1 L199.5,676.8 L180.3,708.5 L161.1,740.1 L141.8,771.8 L122.5,803.4 L103.1,835.0 L83.6,866.6 L64.0,898.1 L44.4,929.6 L24.7,961.1 L4.9,992.6 L-14.9,1024.0 L-34.8,1055.5 L-54.8,1086.9 L-74.9,1118.2 L-95.0,1149.6 L-115.2,1180.9 L-135.5,1212.2 L-155.8,1243.5"/>
<path d="M331.4,454.3 L299.1,472.7 L266.8,491.0 L234.4,509.2 L202.0,527.3 L169.4,545.4 L136.8,563.4 L104.1,581.3 L71.4,599.2 L38.6,617.0 L5.7,634.7 L-27.3,652.3 L-60.3,669.9 L-93.4,687.4 L-126.6,704.8 L-159.8,722.1 L-193.2,739.4 L-226.6,756.6 L-260.0,773.7 L-293.5,790.8 L-327.1,807.8 L-360.8,824.7 L-394.6,841.5 L-428.4,858.3 L-462.3,875.0 L-496.2,891.6"/>
<path d="M331.4,454.3 L294.2,454.3 L257.0,454.1 L219.8,453.9 L182.6,453.5 L145.4,453.1 L108.2,452.6 L71.0,451.9 L33.8,451.2 L-3.4,450.4 L-40.6,449.5 L-77.8,448.4 L-115.0,447.3 L-152.2,446.1 L-189.4,444.8 L-226.6,443.4 L-263.8,441.9 L-301.0,440.3 L-338.2,438.6 L-375.4,436.8 L-412.6,434.9 L-449.8,432.9 L-487.0,430.9 L-524.2,428.7 L-561.4,426.4 L-598.6,424.0"/>
<path d="M331.4,454.3 L299.2,435.9 L267.1,417.4 L235.1,398.8 L203.1,380.1 L171.2,361.4 L139.4,342.6 L107.6,323.7 L75.9,304.8 L44.3,285.8 L12.8,266.7 L-18.7,247.5 L-50.1,228.3 L-81.4,209.0 L-112.7,189.6 L-143.8,170.1 L-175.0,150.6 L-206.0,131.0 L-237.0,111.3 L-267.9,91.6 L-298.7,71.8 L-329.5,51.9 L-360.1,31.9 L-390.8,11.9 L-421.3,-8.2 L-451.8,-28.4"/>
<path d="M331.4,454.3 L312.8,422.4 L294.3,390.5 L275.9,358.6 L257.6,326.6 L239.3,294.6 L221.1,262.6 L202.9,230.6 L184.9,198.6 L166.9,166.5 L149.0,134.4 L131.1,102.3 L113.3,70.1 L95.6,37.9 L78.0,5.8 L60.4,-26.5 L42.9,-58.7 L25.5,-91.0 L8.1,-123.3 L-9.2,-155.6 L-26.4,-187.9 L-43.5,-220.3 L-60.6,-252.7 L-77.6,-285.1 L-94.5,-317.5 L-111.4,-350.0"/></g>
<circle cx="331.4" cy="454.3" r="2.2" fill="#bebebe"/>
</g>
<rect x="21.5" y="142.5" width="636" height="636" fill="none" stroke="#fff" stroke-width="1" shape-rendering="crispEdges"/>
<text x="346" y="425.5" font-family="'Liberation Mono', monospace" font-size="13" font-weight="bold" fill="#cacaca" textLength="35" lengthAdjust="spacingAndGlyphs" >25 km</text>
<text x="377" y="391.5" font-family="'Liberation Mono', monospace" font-size="13" font-weight="bold" fill="#cacaca" textLength="35" lengthAdjust="spacingAndGlyphs" >50 km</text>
<text x="408" y="357.5" font-family="'Liberation Mono', monospace" font-size="13" font-weight="bold" fill="#cacaca" textLength="35" lengthAdjust="spacingAndGlyphs" >75 km</text>
<text x="440.75 446.65 452.55 458.45 464.35 470.25" y="322" text-anchor="middle" font-family="'Liberation Sans', sans-serif" font-size="9.8" font-weight="normal" fill="#cacaca" >100 km</text>
<text x="470.65 476.55 482.45 488.35 494.25 500.15" y="287" text-anchor="middle" font-family="'Liberation Sans', sans-serif" font-size="9.8" font-weight="normal" fill="#cacaca" >125 km</text>
<text x="501.45 507.35 513.25 519.15 525.05 530.95" y="253" text-anchor="middle" font-family="'Liberation Sans', sans-serif" font-size="9.8" font-weight="normal" fill="#cacaca" >150 km</text>
<text x="531.95 537.85 543.75 549.65 555.55 561.45" y="218.5" text-anchor="middle" font-family="'Liberation Sans', sans-serif" font-size="9.8" font-weight="normal" fill="#cacaca" >175 km</text>
<text x="562.75 568.65 574.55 580.45 586.35 592.25" y="184" text-anchor="middle" font-family="'Liberation Sans', sans-serif" font-size="9.8" font-weight="normal" fill="#cacaca" >200 km</text>
<text x="592.95 598.85 604.75 610.65 616.55 622.45" y="150.5" text-anchor="middle" font-family="'Liberation Sans', sans-serif" font-size="9.8" font-weight="normal" fill="#cacaca" >225 km</text>
<text x="32" y="156" font-family="'Liberation Mono', monospace" font-size="13" font-weight="bold" fill="#fff" textLength="245" lengthAdjust="spacingAndGlyphs" >CSU QC2 CONVSF: 12/14/2018 00:50:41</text>
<rect x="96" y="134" width="1" height="8" fill="#fff"/>
<text x="79.5" y="132" font-family="'Liberation Mono', monospace" font-size="13" font-weight="bold" fill="#fff" textLength="35" lengthAdjust="spacingAndGlyphs" >65.5W</text>
<rect x="185" y="134" width="1" height="8" fill="#fff"/>
<text x="168" y="132" font-family="'Liberation Mono', monospace" font-size="13" font-weight="bold" fill="#fff" textLength="35" lengthAdjust="spacingAndGlyphs" >65.0W</text>
<rect x="273" y="134" width="1" height="8" fill="#fff"/>
<text x="256.5" y="132" font-family="'Liberation Mono', monospace" font-size="13" font-weight="bold" fill="#fff" textLength="35" lengthAdjust="spacingAndGlyphs" >64.5W</text>
<rect x="361" y="134" width="1" height="8" fill="#fff"/>
<text x="344.5" y="132" font-family="'Liberation Mono', monospace" font-size="13" font-weight="bold" fill="#fff" textLength="35" lengthAdjust="spacingAndGlyphs" >64.0W</text>
<rect x="450" y="134" width="1" height="8" fill="#fff"/>
<text x="433" y="132" font-family="'Liberation Mono', monospace" font-size="13" font-weight="bold" fill="#fff" textLength="35" lengthAdjust="spacingAndGlyphs" >63.5W</text>
<rect x="538" y="134" width="1" height="8" fill="#fff"/>
<text x="521" y="132" font-family="'Liberation Mono', monospace" font-size="13" font-weight="bold" fill="#fff" textLength="35" lengthAdjust="spacingAndGlyphs" >63.0W</text>
<rect x="626" y="134" width="1" height="8" fill="#fff"/>
<text x="609" y="132" font-family="'Liberation Mono', monospace" font-size="13" font-weight="bold" fill="#fff" textLength="35" lengthAdjust="spacingAndGlyphs" >62.5W</text>
<rect x="18" y="223" width="4" height="1" fill="#fff"/>
<text x="4.00 10.00 16.00 22.00 28.00" y="226" text-anchor="middle" font-family="'Liberation Sans', sans-serif" font-size="8.6" font-weight="normal" fill="#fff" >-30.5</text>
<rect x="18" y="325" width="4" height="1" fill="#fff"/>
<text x="4.00 10.00 16.00 22.00 28.00" y="328" text-anchor="middle" font-family="'Liberation Sans', sans-serif" font-size="8.6" font-weight="normal" fill="#fff" >-31.0</text>
<rect x="18" y="427" width="4" height="1" fill="#fff"/>
<text x="4.00 10.00 16.00 22.00 28.00" y="430" text-anchor="middle" font-family="'Liberation Sans', sans-serif" font-size="8.6" font-weight="normal" fill="#fff" >-31.5</text>
<rect x="18" y="529" width="4" height="1" fill="#fff"/>
<text x="4.00 10.00 16.00 22.00 28.00" y="532" text-anchor="middle" font-family="'Liberation Sans', sans-serif" font-size="8.6" font-weight="normal" fill="#fff" >-32.0</text>
<rect x="18" y="631" width="4" height="1" fill="#fff"/>
<text x="4.00 10.00 16.00 22.00 28.00" y="634" text-anchor="middle" font-family="'Liberation Sans', sans-serif" font-size="8.6" font-weight="normal" fill="#fff" >-32.5</text>
<rect x="18" y="733" width="4" height="1" fill="#fff"/>
<text x="4.00 10.00 16.00 22.00 28.00" y="736" text-anchor="middle" font-family="'Liberation Sans', sans-serif" font-size="8.6" font-weight="normal" fill="#fff" >-33.0</text>
<text x="4.50 10.50 16.50" y="120" text-anchor="middle" font-family="'Liberation Sans', sans-serif" font-size="8.6" font-weight="normal" fill="#fff" >deg</text>
<rect x="659" y="353" width="28" height="142" fill="#00ffff"/>
<rect x="659" y="495" width="28" height="142" fill="#0080ff"/>
<rect x="659" y="420" width="23" height="9" fill="#000"/>
<text x="661.10 667.10 673.10 679.10" y="427" text-anchor="middle" font-family="'Liberation Sans', sans-serif" font-size="8.3" font-weight="normal" fill="#fff" >conv</text>
<rect x="659" y="562" width="28" height="9" fill="#000"/>
<defs><clipPath id="sc"><rect x="659" y="555" width="28" height="20"/></clipPath></defs>
<text x="661.10 667.10 673.10 679.10 685.10" y="569" text-anchor="middle" font-family="'Liberation Sans', sans-serif" font-size="8.3" font-weight="normal" fill="#fff" clip-path="url(#sc)">strat</text>
<path d="M687.5,778 V142.5 H717.5 V798" fill="none" stroke="#ffb6c1" stroke-width="1" shape-rendering="crispEdges"/>
<text x="699.50 705.50" y="466" text-anchor="middle" font-family="'Liberation Sans', sans-serif" font-size="8.6" font-weight="normal" fill="#ffb6c1" >2D</text>
<rect x="671" y="147" width="5" height="1" fill="#fff"/>
<rect x="0" y="798" width="718" height="1" fill="#ffb6c1"/>
<rect x="157" y="780" width="27" height="18" fill="#808080"/>
<rect x="21" y="780" width="1" height="18" fill="#ffb6c1"/>
<text x="-9.4" y="790" font-family="'Liberation Serif', monospace" font-size="13.5" font-weight="bold" fill="#ffb6c1" textLength="63" lengthAdjust="spacingAndGlyphs" >00z 12/14</text>
<rect x="61" y="794" width="1" height="4" fill="#ffb6c1"/>
<rect x="102" y="794" width="1" height="4" fill="#ffb6c1"/>
<rect x="143" y="794" width="1" height="4" fill="#ffb6c1"/>
<rect x="184" y="780" width="1" height="18" fill="#ffb6c1"/>
<text x="177.7" y="792" font-family="'Liberation Serif', monospace" font-size="13.5" font-weight="bold" fill="#ffb6c1" textLength="21" lengthAdjust="spacingAndGlyphs" >01z</text>
<rect x="225" y="794" width="1" height="4" fill="#ffb6c1"/>
<rect x="266" y="794" width="1" height="4" fill="#ffb6c1"/>
<rect x="307" y="794" width="1" height="4" fill="#ffb6c1"/>
<rect x="348" y="780" width="1" height="18" fill="#ffb6c1"/>
<text x="341.2" y="792" font-family="'Liberation Serif', monospace" font-size="13.5" font-weight="bold" fill="#ffb6c1" textLength="21" lengthAdjust="spacingAndGlyphs" >02z</text>
<rect x="388" y="794" width="1" height="4" fill="#ffb6c1"/>
<rect x="429" y="794" width="1" height="4" fill="#ffb6c1"/>
<rect x="470" y="794" width="1" height="4" fill="#ffb6c1"/>
<rect x="511" y="780" width="1" height="18" fill="#ffb6c1"/>
<text x="504.7" y="792" font-family="'Liberation Serif', monospace" font-size="13.5" font-weight="bold" fill="#ffb6c1" textLength="21" lengthAdjust="spacingAndGlyphs" >03z</text>
<rect x="552" y="794" width="1" height="4" fill="#ffb6c1"/>
<rect x="593" y="794" width="1" height="4" fill="#ffb6c1"/>
<rect x="634" y="794" width="1" height="4" fill="#ffb6c1"/>
<rect x="675" y="780" width="1" height="18" fill="#ffb6c1"/>
<text x="668.2" y="792" font-family="'Liberation Serif', monospace" font-size="13.5" font-weight="bold" fill="#ffb6c1" textLength="21" lengthAdjust="spacingAndGlyphs" >04z</text>
<rect x="716" y="793" width="1" height="5" fill="#ffb6c1"/>
</svg>
</body></html>
